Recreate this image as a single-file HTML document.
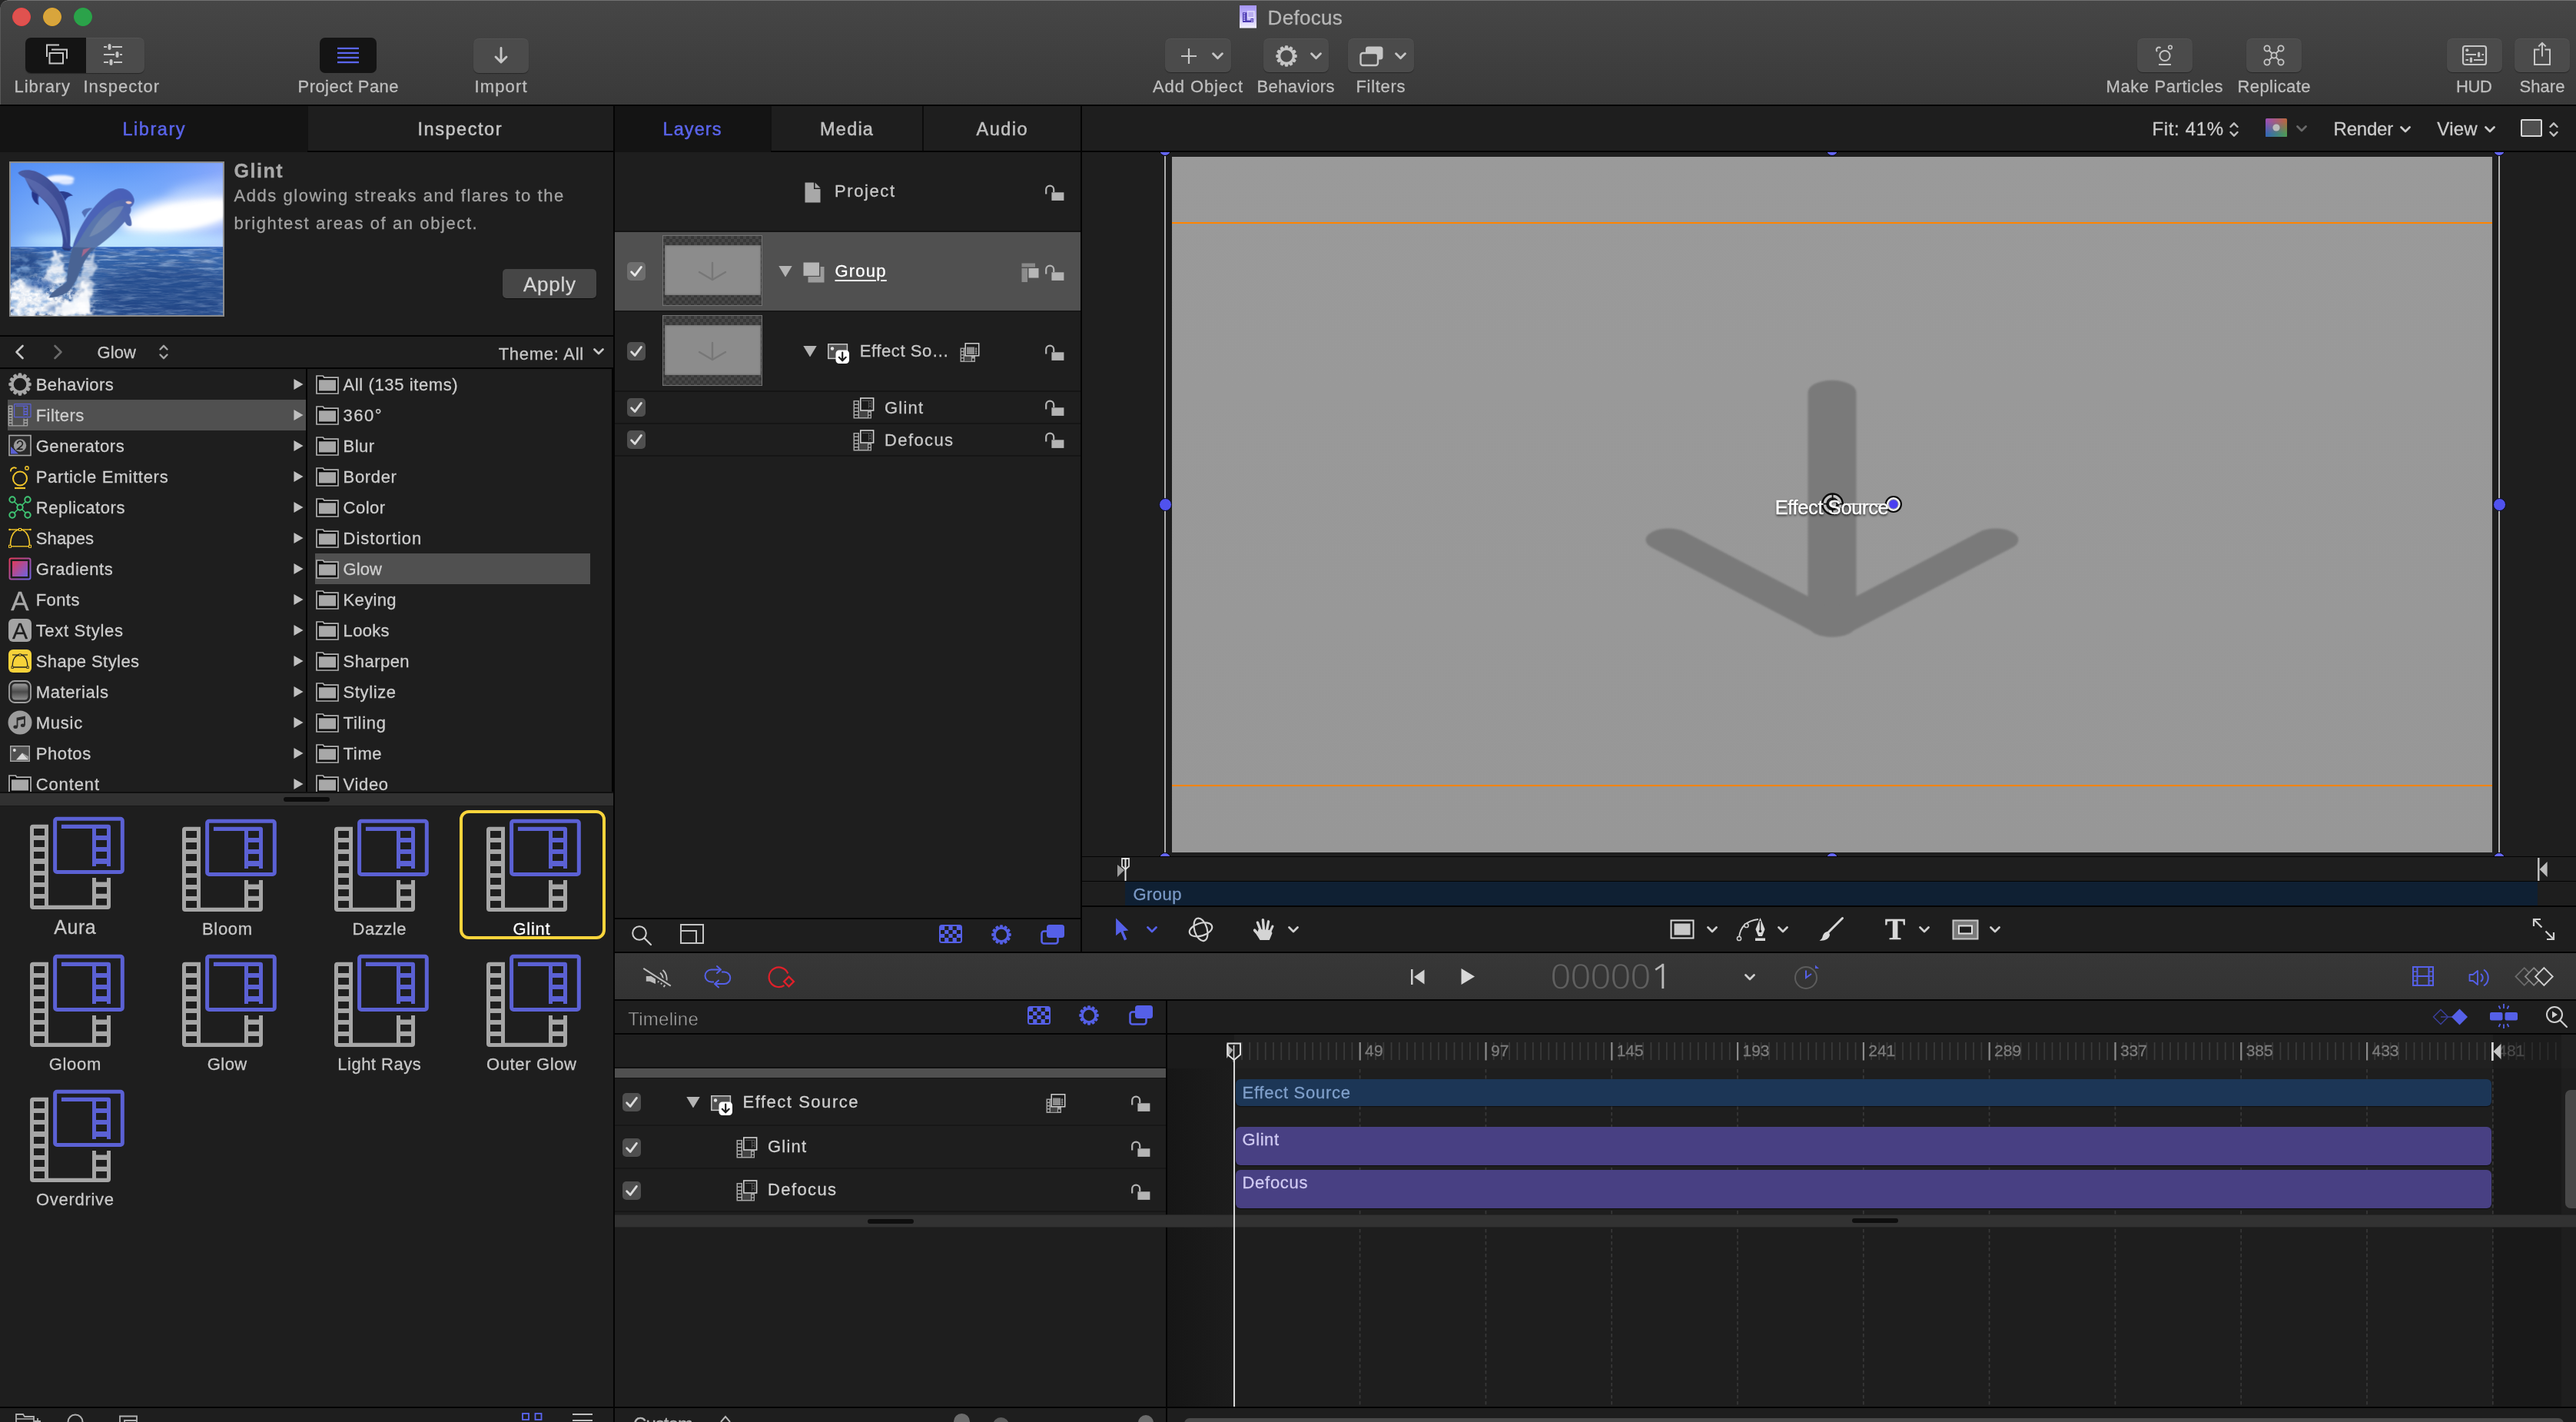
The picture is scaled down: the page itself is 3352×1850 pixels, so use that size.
<!DOCTYPE html>
<html><head><meta charset="utf-8"><title>Defocus</title>
<style>
html,body{margin:0;padding:0;background:#1e1e1e;overflow:hidden;}
html{width:3352px;height:1850px;}
body{width:3352px;height:1850px;position:relative;overflow:hidden;font-family:"Liberation Sans",sans-serif;}
body div{position:absolute;box-sizing:border-box;}
.t{white-space:nowrap;-webkit-text-stroke-width:0.3px;}
.i{position:absolute;overflow:visible;}
#root{left:0;top:0;width:3352px;height:1850px;will-change:transform;overflow:hidden;}
</style></head><body>
<svg width="0" height="0" style="position:absolute"><defs>
<symbol id="bigf" viewBox="0 0 200 180"><path fill="#a6a6a6" fill-rule="evenodd" d="M23 22.8 H43 V127.8 H100 V92 H105 V97.5 H119 V92 H124 V128.9 a4 4 0 0 1 -4 4 H23 a4 4 0 0 1 -4 -4 V26.8 a4 4 0 0 1 4 -4 Z M24 28.1 h14 v8.9 h-14 Z M24 43 h14 v8.9 h-14 Z M24 58 h14 v8.9 h-14 Z M24 74 h14 v8.9 h-14 Z M24 89 h14 v8.9 h-14 Z M24 104 h14 v8.9 h-14 Z M24 119 h14 v8.9 h-14 Z M105 104 h14 v8.7 h-14 Z M105 119 h14 v8.8 h-14 Z"/><rect x="51.6" y="15.2" width="87.7" height="69.3" rx="2.5" fill="none" stroke="#5b61d4" stroke-width="5"/><path fill="#5b61d4" fill-rule="evenodd" d="M59.9 22.8 H121 a3 3 0 0 1 3 3 V77 H119 V74 H105 V77 H100 V28.1 H59.9 Z M105 28.1 h14 v8.9 h-14 Z M105 43 h14 v9 h-14 Z M105 58 h14 v9 h-14 Z"/></symbol>
<symbol id="lock" viewBox="0 0 26 22"><path d="M1.2 12.5 V6.6 a5 5 0 0 1 10 0 V10" fill="none" stroke="#b4b4b4" stroke-width="2.2"/><rect x="8.4" y="10.3" width="16" height="10.6" fill="#b4b4b4"/></symbol>
<symbol id="chk" viewBox="0 0 24 24"><rect width="24" height="24" rx="5" fill="#4f4f4f"/><path d="M5.6 12.8 L10.2 17.4 L18.4 6.4" fill="none" stroke="#dcdcdc" stroke-width="2.8" stroke-linecap="round" stroke-linejoin="round"/></symbol>
<symbol id="tri" viewBox="0 0 18 15"><path d="M0 0 H18 L9 15 Z" fill="#b4b4b4"/></symbol>
<symbol id="arr" viewBox="0 0 13 15"><path d="M0 0 L13 7.5 L0 15 Z" fill="#c0c0c0"/></symbol>
<symbol id="folder" viewBox="0 0 30 25"><path d="M1 1 H9.300 L10.8 3.100 H29 V24 H1 Z" fill="#0c0c0c" stroke="#b2b2b2" stroke-width="1.700" stroke-linejoin="miter"/><rect x="3.900" y="6.300" width="22.2" height="14.2" fill="#a8a8a8"/></symbol>
<symbol id="smf" viewBox="0 0 28 28"><path fill="#a8a8a8" fill-rule="evenodd" d="M0.5 4 H8 V27.5 H0.5 Z M2 5.5 v3 h4.5 v-3 Z M2 10 v3 h4.5 v-3 Z M2 14.5 v3 h4.5 v-3 Z M2 19 v3 h4.5 v-3 Z M2 23.5 v2.5 h4.5 v-2.5 Z"/><path fill="#a8a8a8" fill-rule="evenodd" d="M19 18 H24 V27.5 H8 V26 H19 Z M20.3 19.5 v3 h2.4 v-3 Z M20.3 23.8 v2.4 h2.4 v-2.4 Z"/><rect x="8" y="18" width="11" height="8" fill="#444"/><rect x="9.8" y="1" width="16.8" height="16" fill="#1a1a1a" stroke="#d2d2d2" stroke-width="1.6"/><path d="M12 4.4 H24 M20.5 4.4 V14.5 M24 4.4 V14.5 M20.5 8 H24 M20.5 11.4 H24" stroke="#555" stroke-width="1.2" fill="none"/></symbol>
<symbol id="gear" viewBox="-14 -14 28 28"><path d="M-2.3 -10 L-1.5 -13.3 H1.5 L2.3 -10 Z" stroke="currentColor" stroke-width="0.8" stroke-linejoin="round" transform="rotate(0)"/><path d="M-2.3 -10 L-1.5 -13.3 H1.5 L2.3 -10 Z" stroke="currentColor" stroke-width="0.8" stroke-linejoin="round" transform="rotate(30)"/><path d="M-2.3 -10 L-1.5 -13.3 H1.5 L2.3 -10 Z" stroke="currentColor" stroke-width="0.8" stroke-linejoin="round" transform="rotate(60)"/><path d="M-2.3 -10 L-1.5 -13.3 H1.5 L2.3 -10 Z" stroke="currentColor" stroke-width="0.8" stroke-linejoin="round" transform="rotate(90)"/><path d="M-2.3 -10 L-1.5 -13.3 H1.5 L2.3 -10 Z" stroke="currentColor" stroke-width="0.8" stroke-linejoin="round" transform="rotate(120)"/><path d="M-2.3 -10 L-1.5 -13.3 H1.5 L2.3 -10 Z" stroke="currentColor" stroke-width="0.8" stroke-linejoin="round" transform="rotate(150)"/><path d="M-2.3 -10 L-1.5 -13.3 H1.5 L2.3 -10 Z" stroke="currentColor" stroke-width="0.8" stroke-linejoin="round" transform="rotate(180)"/><path d="M-2.3 -10 L-1.5 -13.3 H1.5 L2.3 -10 Z" stroke="currentColor" stroke-width="0.8" stroke-linejoin="round" transform="rotate(210)"/><path d="M-2.3 -10 L-1.5 -13.3 H1.5 L2.3 -10 Z" stroke="currentColor" stroke-width="0.8" stroke-linejoin="round" transform="rotate(240)"/><path d="M-2.3 -10 L-1.5 -13.3 H1.5 L2.3 -10 Z" stroke="currentColor" stroke-width="0.8" stroke-linejoin="round" transform="rotate(270)"/><path d="M-2.3 -10 L-1.5 -13.3 H1.5 L2.3 -10 Z" stroke="currentColor" stroke-width="0.8" stroke-linejoin="round" transform="rotate(300)"/><path d="M-2.3 -10 L-1.5 -13.3 H1.5 L2.3 -10 Z" stroke="currentColor" stroke-width="0.8" stroke-linejoin="round" transform="rotate(330)"/><circle r="9.15" fill="none" stroke-width="2.8" stroke="currentColor"/></symbol>
<symbol id="lay" viewBox="0 0 32 28"><rect x="8" y="1" width="23" height="17" rx="3.5"/><rect x="1.5" y="9.5" width="21" height="16" rx="3" fill="none" stroke="currentColor" stroke-width="2.6"/></symbol>
<symbol id="cbd" viewBox="0 0 30 24"><rect x="1" y="1" width="28" height="22" rx="2.5" fill="none" stroke="currentColor" stroke-width="2"/><rect x="2.0" y="2" width="5.2" height="5"/><rect x="2.0" y="12" width="5.2" height="5"/><rect x="7.2" y="7" width="5.2" height="5"/><rect x="7.2" y="17" width="5.2" height="5"/><rect x="12.4" y="2" width="5.2" height="5"/><rect x="12.4" y="12" width="5.2" height="5"/><rect x="17.6" y="7" width="5.2" height="5"/><rect x="17.6" y="17" width="5.2" height="5"/><rect x="22.8" y="2" width="5.2" height="5"/><rect x="22.8" y="12" width="5.2" height="5"/></symbol>
<symbol id="chev" viewBox="0 0 14 9"><path d="M1.5 1.5 L7 7 L12.5 1.5" fill="none" stroke="currentColor" stroke-width="2.7" stroke-linecap="round" stroke-linejoin="round"/></symbol>
<symbol id="step" viewBox="0 0 12 22"><path d="M1.5 7.5 L6 2.800 L10.5 7.5 M1.5 14.5 L6 19.200 L10.5 14.5" fill="none" stroke="currentColor" stroke-width="2.400" stroke-linecap="round" stroke-linejoin="round"/></symbol>
</defs></svg>
<div id="root">
<div style="left:0px;top:0px;width:3352px;height:1850px;background:#1e1e1e;"></div>
<div style="left:0px;top:0px;width:3352px;height:136px;background:linear-gradient(#464646,#393939);border-top:1px solid #727272;border-left:1px solid #585858;border-top-left-radius:10px;"></div>
<div style="left:0;top:0;width:12px;height:12px;background:radial-gradient(circle at 11px 11px, transparent 10.5px, #262626 11px);"></div>
<div style="left:0px;top:136px;width:3352px;height:2px;background:#040404;"></div>
<div style="left:16px;top:10px;width:24px;height:24px;border-radius:50%;background:#e0524f;border:1px solid #ee4646;"></div>
<div style="left:56px;top:10px;width:24px;height:24px;border-radius:50%;background:#d8a53c;border:1px solid #e5a82b;"></div>
<div style="left:96px;top:10px;width:24px;height:24px;border-radius:50%;background:#2ba24a;border:1px solid #25a845;"></div>
<div style="left:33px;top:49px;width:155px;height:45.5px;background:#4b4b4b;border-radius:7px;box-shadow:0 1px 1px rgba(0,0,0,.35), inset 0 1px 0 rgba(255,255,255,.05);"></div>
<div style="left:33px;top:49px;width:79px;height:45.5px;background:#141414;border-radius:7px 0 0 7px;"></div>
<svg class="i" style="left:58px;top:56px;" width="32" height="30" viewBox="0 0 32 30"><path d="M3 18 V2.5 H19" fill="none" stroke="#c6c6c6" stroke-width="2"/><path d="M9 8.5 H29 V20.5" fill="none" stroke="#c6c6c6" stroke-width="2"/><rect x="6.5" y="13" width="17.5" height="13.5" fill="none" stroke="#c6c6c6" stroke-width="2"/></svg>
<svg class="i" style="left:134px;top:55px;" width="28" height="32" viewBox="0 0 28 32"><path d="M1 6 H5.0 M12.0 6 H25" stroke="#c6c6c6" stroke-width="2" fill="none"/><rect x="6.5" y="2" width="4" height="8" rx="2" fill="#c6c6c6"/><path d="M1 16 H15.0 M22.0 16 H25" stroke="#c6c6c6" stroke-width="2" fill="none"/><rect x="16.5" y="12" width="4" height="8" rx="2" fill="#c6c6c6"/><path d="M1 26 H7.0 M14.0 26 H25" stroke="#c6c6c6" stroke-width="2" fill="none"/><rect x="8.5" y="22" width="4" height="8" rx="2" fill="#c6c6c6"/></svg>
<div class="t" style="left:18.60px;top:96.75px;height:31px;line-height:31px;font-size:22px;color:#bebebe;letter-spacing:0.859px;">Library</div>
<div class="t" style="left:108.50px;top:96.75px;height:31px;line-height:31px;font-size:22px;color:#bebebe;letter-spacing:1.001px;">Inspector</div>
<div style="left:416px;top:49px;width:74px;height:45.5px;background:#141414;border-radius:7px;"></div>
<svg class="i" style="left:438px;top:60px;" width="30" height="24" viewBox="0 0 30 24"><rect x="1" y="1.8" width="28" height="2.300" fill="#5b66f0"/><rect x="1" y="7.8" width="28" height="2.300" fill="#5b66f0"/><rect x="1" y="13.8" width="28" height="2.300" fill="#5b66f0"/><rect x="1" y="19.9" width="28" height="2.300" fill="#5b66f0"/></svg>
<div class="t" style="left:387.50px;top:96.75px;height:31px;line-height:31px;font-size:22px;color:#bebebe;letter-spacing:0.458px;">Project Pane</div>
<div style="left:616px;top:50px;width:72px;height:44.5px;background:#4b4b4b;border-radius:7px;box-shadow:0 1px 1px rgba(0,0,0,.35), inset 0 1px 0 rgba(255,255,255,.05);"></div>
<svg class="i" style="left:640px;top:59px;" width="24" height="26" viewBox="0 0 24 26"><path d="M12 3.500 V22 M5 15 L12 22 L19 15" fill="none" stroke="#c6c6c6" stroke-width="2.900" stroke-linecap="round" stroke-linejoin="round"/></svg>
<div class="t" style="left:617.50px;top:96.75px;height:31px;line-height:31px;font-size:22px;color:#bebebe;letter-spacing:1.130px;">Import</div>
<svg class="i" style="left:1613px;top:6.8px;" width="22" height="29.5" viewBox="0 0 22 29.5"><defs><linearGradient id="dg" x1="0" y1="0" x2="0" y2="1"><stop offset="0" stop-color="#a595f4"/><stop offset=".5" stop-color="#c3b8f8"/><stop offset="1" stop-color="#f4f1ff"/></linearGradient></defs><rect width="22" height="29.5" fill="url(#dg)"/><path fill="#4a38b0" fill-rule="evenodd" d="M4 9.200 H9.500 V19.5 H14.5 V17 H18 V22 H4 Z M5 10.2 v1.500 h2.300 v-1.500 Z M5 13 v1.500 h2.300 v-1.500 Z M5 15.800 v1.500 h2.300 v-1.500 Z M5 18.600 v1.500 h2.300 v-1.500 Z M15.3 18 v1.300 h1.900 v-1.300 Z M15.300 20 v1.200 h1.900 v-1.200 Z"/><rect x="10" y="7.200" width="9.700" height="9.300" fill="#e4defc"/><rect x="11.200" y="8.500" width="7" height="6.600" fill="#b9adf0"/></svg>
<div class="t" style="left:1649.60px;top:4.70px;height:36px;line-height:36px;font-size:26px;color:#b6b6b6;letter-spacing:0.303px;">Defocus</div>
<div style="left:1516px;top:50px;width:86px;height:44px;background:#4b4b4b;border-radius:7px;box-shadow:0 1px 1px rgba(0,0,0,.35), inset 0 1px 0 rgba(255,255,255,.05);"></div>
<div style="left:1643.5px;top:50px;width:85.5px;height:44px;background:#4b4b4b;border-radius:7px;box-shadow:0 1px 1px rgba(0,0,0,.35), inset 0 1px 0 rgba(255,255,255,.05);"></div>
<div style="left:1754px;top:50px;width:86px;height:44px;background:#4b4b4b;border-radius:7px;box-shadow:0 1px 1px rgba(0,0,0,.35), inset 0 1px 0 rgba(255,255,255,.05);"></div>
<svg class="i" style="left:1536px;top:62px;" width="22" height="22" viewBox="0 0 22 22"><path d="M11 1 V21 M1 11 H21" stroke="#c6c6c6" stroke-width="2.2" fill="none"/></svg>
<svg class="i" style="left:1577px;top:68px;color:#c6c6c6;" width="15" height="10"><use href="#chev"/></svg>
<svg class="i" style="left:1660px;top:58.5px;color:#c6c6c6;fill:#c6c6c6;" width="28" height="28"><use href="#gear"/></svg>
<svg class="i" style="left:1704.5px;top:68px;color:#c6c6c6;" width="15" height="10"><use href="#chev"/></svg>
<svg class="i" style="left:1769px;top:59px;" width="32" height="28" viewBox="0 0 32 28"><rect x="8" y="1.5" width="22.5" height="17" rx="3.5" fill="#c6c6c6"/><rect x="1.5" y="10" width="22.5" height="16" rx="3" fill="#4b4b4b" stroke="#c6c6c6" stroke-width="2.4"/></svg>
<svg class="i" style="left:1815px;top:68px;color:#c6c6c6;" width="15" height="10"><use href="#chev"/></svg>
<div class="t" style="left:1500.00px;top:96.75px;height:31px;line-height:31px;font-size:22px;color:#bebebe;letter-spacing:0.907px;">Add Object</div>
<div class="t" style="left:1635.50px;top:96.75px;height:31px;line-height:31px;font-size:22px;color:#bebebe;letter-spacing:0.396px;">Behaviors</div>
<div class="t" style="left:1764.50px;top:96.75px;height:31px;line-height:31px;font-size:22px;color:#bebebe;letter-spacing:0.686px;">Filters</div>
<div style="left:2781px;top:50px;width:72px;height:44px;background:#4b4b4b;border-radius:7px;box-shadow:0 1px 1px rgba(0,0,0,.35), inset 0 1px 0 rgba(255,255,255,.05);"></div>
<div style="left:2923px;top:50px;width:72px;height:44px;background:#4b4b4b;border-radius:7px;box-shadow:0 1px 1px rgba(0,0,0,.35), inset 0 1px 0 rgba(255,255,255,.05);"></div>
<div style="left:3184px;top:50px;width:72px;height:44px;background:#4b4b4b;border-radius:7px;box-shadow:0 1px 1px rgba(0,0,0,.35), inset 0 1px 0 rgba(255,255,255,.05);"></div>
<div style="left:3272px;top:50px;width:72px;height:44px;background:#4b4b4b;border-radius:7px;box-shadow:0 1px 1px rgba(0,0,0,.35), inset 0 1px 0 rgba(255,255,255,.05);"></div>
<svg class="i" style="left:2803px;top:57px;" width="28" height="30" viewBox="0 0 28 30"><circle cx="14" cy="15.5" r="6.6" fill="none" stroke="#c6c6c6" stroke-width="2"/><path d="M4 10 A 3 3 0 0 1 8.5 5.5" fill="none" stroke="#c6c6c6" stroke-width="2"/><circle cx="21" cy="4.5" r="2.3" fill="none" stroke="#c6c6c6" stroke-width="1.6"/><path d="M6 27 H22" stroke="#c6c6c6" stroke-width="2"/></svg>
<svg class="i" style="left:2944px;top:57px;" width="30" height="30" viewBox="0 0 30 30"><path d="M7 7 L23 23 M23 7 L7 23" stroke="#c6c6c6" stroke-width="1.8"/><circle cx="6" cy="6" r="3.6" fill="#4b4b4b" stroke="#c6c6c6" stroke-width="1.8"/><circle cx="24" cy="6" r="3.6" fill="#4b4b4b" stroke="#c6c6c6" stroke-width="1.8"/><circle cx="15" cy="15" r="3.6" fill="#4b4b4b" stroke="#c6c6c6" stroke-width="1.8"/><circle cx="6" cy="24" r="3.6" fill="#4b4b4b" stroke="#c6c6c6" stroke-width="1.8"/><circle cx="24" cy="24" r="3.6" fill="#4b4b4b" stroke="#c6c6c6" stroke-width="1.8"/></svg>
<svg class="i" style="left:3203px;top:58px;" width="34" height="28" viewBox="0 0 34 28"><rect x="2" y="2" width="30" height="24" rx="2.800" fill="none" stroke="#c6c6c6" stroke-width="2.200"/><path d="M5.500 13 H19 M26.5 13 H29 M5.500 20 H9 M16 20 H28.500" stroke="#c6c6c6" stroke-width="1.900"/><circle cx="7.300" cy="7.200" r="2" fill="#c6c6c6"/><rect x="21" y="9.500" width="3.200" height="7" rx="1.600" fill="#c6c6c6"/><rect x="10.800" y="16.500" width="3.200" height="7" rx="1.600" fill="#c6c6c6"/></svg>
<svg class="i" style="left:3296px;top:53px;" width="24" height="34" viewBox="0 0 24 34"><path d="M8.500 11.500 H2 V31 H22 V11.500 H15.500" fill="none" stroke="#c6c6c6" stroke-width="2"/><path d="M12 20.500 V3 M7.300 7.500 L12 2.800 L16.700 7.500" fill="none" stroke="#c6c6c6" stroke-width="2" stroke-linejoin="miter"/></svg>
<div class="t" style="left:2740.50px;top:96.75px;height:31px;line-height:31px;font-size:22px;color:#bebebe;letter-spacing:0.595px;">Make Particles</div>
<div class="t" style="left:2911.50px;top:96.75px;height:31px;line-height:31px;font-size:22px;color:#bebebe;letter-spacing:0.411px;">Replicate</div>
<div class="t" style="left:3196.00px;top:96.75px;height:31px;line-height:31px;font-size:22px;color:#bebebe;letter-spacing:-0.330px;">HUD</div>
<div class="t" style="left:3278.50px;top:96.75px;height:31px;line-height:31px;font-size:22px;color:#bebebe;letter-spacing:0.073px;">Share</div>
<div style="left:0px;top:138px;width:400px;height:60px;background:#141414;"></div>
<div style="left:400px;top:138px;width:398px;height:58px;background:#1e1e1e;"></div>
<div style="left:400px;top:196px;width:398px;height:2px;background:#040404;"></div>
<div style="left:399px;top:138px;width:1.5px;height:58px;background:#141414;"></div>
<div style="left:798px;top:138px;width:2px;height:1712px;background:#040404;"></div>
<div class="t" style="left:159.50px;top:151.77px;height:33px;line-height:33px;font-size:23.5px;color:#5a64ea;letter-spacing:1.528px;-webkit-text-stroke:0.5px #5a64ea;">Library</div>
<div class="t" style="left:543.50px;top:151.77px;height:33px;line-height:33px;font-size:23.5px;color:#c4c4c4;letter-spacing:1.542px;-webkit-text-stroke:0.5px #c4c4c4;">Inspector</div>
<svg class="i" style="left:12px;top:210px;" width="280" height="202" viewBox="78 65 1810 1305"><defs>
<linearGradient id="sky" x1="0" y1="0" x2="0" y2="1"><stop offset="0" stop-color="#5a94f6"/><stop offset=".35" stop-color="#76aafa"/><stop offset=".8" stop-color="#9cc8fc"/><stop offset="1" stop-color="#b9e0ff"/></linearGradient>
<linearGradient id="sky2" x1="0" y1="0" x2="1" y2="0"><stop offset="0" stop-color="#4a86f2" stop-opacity=".5"/><stop offset=".45" stop-color="#6fa6fa" stop-opacity="0"/><stop offset="1" stop-color="#a9b4ff" stop-opacity=".55"/></linearGradient>
<linearGradient id="sea" x1="0" y1="0" x2="0" y2="1"><stop offset="0" stop-color="#2b60b8"/><stop offset=".12" stop-color="#3666ab"/><stop offset=".5" stop-color="#2f5a9c"/><stop offset="1" stop-color="#294d8b"/></linearGradient>
<linearGradient id="d1" x1="0" y1="0" x2="1" y2="1"><stop offset="0" stop-color="#4d5da3"/><stop offset=".5" stop-color="#3e4d94"/><stop offset="1" stop-color="#384a96"/></linearGradient>
<linearGradient id="d2" x1="1" y1="0" x2="0" y2="1"><stop offset="0" stop-color="#4a5fb4"/><stop offset=".35" stop-color="#5a76ae"/><stop offset=".7" stop-color="#5b78a6"/><stop offset="1" stop-color="#6a7fa2"/></linearGradient>
<filter id="b40" x="-50%" y="-50%" width="200%" height="200%"><feGaussianBlur stdDeviation="45"/></filter>
<filter id="b20" x="-50%" y="-50%" width="200%" height="200%"><feGaussianBlur stdDeviation="16"/></filter>
<filter id="b10" x="-50%" y="-50%" width="200%" height="200%"><feGaussianBlur stdDeviation="9"/></filter>
<filter id="b6" x="-20%" y="-20%" width="140%" height="140%"><feGaussianBlur stdDeviation="4"/></filter>
<filter id="wv" x="0" y="0" width="100%" height="100%"><feTurbulence type="fractalNoise" baseFrequency="0.006 0.045" numOctaves="4" seed="7" result="n"/><feColorMatrix in="n" type="matrix" values="0 0 0 0 0.72  0 0 0 0 0.84  0 0 0 0 1  2.6 0 0 0 -1.25"/><feGaussianBlur stdDeviation="2"/></filter>
<filter id="wd" x="0" y="0" width="100%" height="100%"><feTurbulence type="fractalNoise" baseFrequency="0.005 0.04" numOctaves="3" seed="21" result="n"/><feColorMatrix in="n" type="matrix" values="0 0 0 0 0.08  0 0 0 0 0.17  0 0 0 0 0.4  0 2.8 0 0 -1.2"/><feGaussianBlur stdDeviation="3"/></filter>
<filter id="sp" x="-30%" y="-30%" width="160%" height="160%"><feTurbulence type="fractalNoise" baseFrequency="0.02 0.016" numOctaves="3" seed="4" result="n"/><feDisplacementMap in="SourceGraphic" in2="n" scale="120" xChannelSelector="R" yChannelSelector="G"/><feGaussianBlur stdDeviation="7"/></filter>
<filter id="fo" x="0" y="0" width="100%" height="100%"><feTurbulence type="fractalNoise" baseFrequency="0.03 0.03" numOctaves="3" seed="11" result="n"/><feColorMatrix in="n" type="matrix" values="0 0 0 0 1  0 0 0 0 1  0 0 0 0 1  3.5 0 0 0 -1.45"/><feGaussianBlur stdDeviation="2.500"/></filter>
<filter id="bs" x="0" y="0" width="100%" height="100%"><feTurbulence type="fractalNoise" baseFrequency="0.012 0.02" numOctaves="4" seed="33" result="n"/><feColorMatrix in="n" type="matrix" values="0 0 0 0 0.24  0 0 0 0 0.42  0 0 0 0 0.72  0 0 3.4 0 -1.55"/><feGaussianBlur stdDeviation="5"/></filter>
<linearGradient id="spg" x1="0" y1="0" x2="1" y2="0"><stop offset="0" stop-color="#fff"/><stop offset=".72" stop-color="#fff"/><stop offset="1" stop-color="#000"/></linearGradient><linearGradient id="spg2" x1="0" y1="0" x2="0" y2="1"><stop offset="0" stop-color="#000"/><stop offset=".3" stop-color="#fff"/></linearGradient><mask id="spc"><rect x="90" y="786" width="760" height="572" fill="url(#spg)"/><rect x="90" y="786" width="760" height="572" fill="url(#spg2)" style="mix-blend-mode:multiply"/></mask>
<clipPath id="pc"><rect x="90" y="78" width="1786" height="1280"/></clipPath>
<clipPath id="seac"><rect x="90" y="786" width="1786" height="572"/></clipPath>
<radialGradient id="fm" cx=".22" cy=".95" r=".62" gradientTransform="scale(1 .9)"><stop offset="0" stop-color="#fff"/><stop offset=".55" stop-color="#fff" stop-opacity=".9"/><stop offset="1" stop-color="#fff" stop-opacity="0"/></radialGradient>
<mask id="fmask"><rect x="90" y="786" width="1786" height="572" fill="#000"/><ellipse cx="330" cy="1290" rx="520" ry="330" fill="url(#fmg)"/></mask>
<radialGradient id="fmg"><stop offset="0" stop-color="#fff"/><stop offset=".6" stop-color="#bbb"/><stop offset="1" stop-color="#000"/></radialGradient>
</defs>
<rect x="78" y="65" width="1810" height="1305" fill="#8e8e8e"/>
<g clip-path="url(#pc)">
<rect x="90" y="78" width="1786" height="710" fill="url(#sky)"/>
<rect x="90" y="78" width="1786" height="710" fill="url(#sky2)"/>
<ellipse cx="1530" cy="515" rx="520" ry="150" fill="#ffffff" filter="url(#b40)" transform="rotate(-10 1530 515)"/>
<ellipse cx="1560" cy="520" rx="400" ry="105" fill="#ffffff" filter="url(#b20)" transform="rotate(-10 1560 520)"/>
<ellipse cx="1700" cy="300" rx="300" ry="60" fill="#c4dcff" opacity=".6" filter="url(#b40)" transform="rotate(-10 1700 300)"/>
<ellipse cx="1100" cy="735" rx="900" ry="55" fill="#c4ecff" opacity=".85" filter="url(#b40)"/>
<ellipse cx="505" cy="212" rx="120" ry="32" fill="#eef3ff" filter="url(#b10)"/>
<ellipse cx="560" cy="238" rx="60" ry="22" fill="#dfe9ff" filter="url(#b10)"/>
<rect x="90" y="786" width="1786" height="572" fill="url(#sea)"/>
<g clip-path="url(#seac)">
<rect x="90" y="786" width="1786" height="572" filter="url(#wd)"/>
<rect x="90" y="786" width="1786" height="572" filter="url(#wv)" opacity=".55"/>
<ellipse cx="1400" cy="1160" rx="560" ry="210" fill="#1d3f80" opacity=".45" filter="url(#b40)"/>
<ellipse cx="180" cy="900" rx="170" ry="90" fill="#1c3a78" opacity=".6" filter="url(#b40)"/>
<rect x="90" y="786" width="1786" height="572" filter="url(#fo)" mask="url(#fmask)"/>
</g>
<rect x="90" y="783" width="1786" height="5" fill="#2d5fc0" opacity=".8"/>
<g filter="url(#sp)" fill="#ffffff" opacity=".9">
<path d="M90 1080 C200 1030 330 1100 400 1180 C470 1240 560 1230 640 1260 C720 1290 780 1330 800 1360 L90 1360 Z"/>
<path d="M420 1080 C400 980 430 860 470 800 C490 860 540 900 560 1000 C570 1060 540 1090 500 1100 Z" opacity=".95"/>
<path d="M610 1330 C590 1200 640 1060 700 960 C720 900 760 840 790 800 C800 900 790 1000 770 1100 C760 1200 760 1280 770 1340 Z" opacity=".7"/>
<path d="M360 1080 C380 1000 410 960 440 900 C450 980 450 1040 430 1100 Z" opacity=".8"/>
</g>
<g mask="url(#spc)"><rect x="90" y="786" width="760" height="572" filter="url(#bs)" opacity=".8"/></g>
<ellipse cx="330" cy="1095" rx="120" ry="40" fill="#3d68ad" opacity=".7" filter="url(#b20)"/>
<ellipse cx="500" cy="1300" rx="110" ry="30" fill="#6f8fc0" opacity=".75" filter="url(#b20)"/>
<ellipse cx="240" cy="1010" rx="90" ry="30" fill="#2c528f" opacity=".5" filter="url(#b20)"/>
<g filter="url(#b6)">
<path d="M152 160 C170 138 235 125 300 148 C395 185 480 265 530 365 C580 470 598 640 590 770 L602 800 L545 812 L520 792 C540 745 525 640 480 545 C440 465 390 410 330 355 C318 380 322 410 328 430 C285 415 262 360 270 318 C240 275 222 225 205 200 C182 190 160 178 152 160 Z" fill="url(#d1)"/>
<path d="M500 318 C545 312 592 328 614 354 C582 352 562 366 548 398 C535 370 520 340 500 318 Z" fill="#2c3c8e"/>
<path d="M268 316 C260 360 282 412 327 430 C310 395 314 360 318 342 Z" fill="#26368a"/>
<path d="M205 200 C300 215 420 300 480 400 C535 495 560 620 566 760 C535 640 500 540 440 460 C375 380 280 320 205 200 Z" fill="#6c7cbc" opacity=".45"/>
<path d="M522 790 L602 800 L585 818 L540 812 Z" fill="#2a3a78"/>
<path d="M1010 292 C1078 292 1124 340 1130 398 C1128 420 1115 438 1098 450 C1108 470 1100 495 1088 512 C1102 545 1112 580 1106 604 C1086 616 1064 602 1050 572 C990 645 905 722 805 792 C745 835 705 905 665 1005 C645 1062 615 1112 594 1135 C575 1175 480 1205 412 1212 C438 1150 520 1112 562 1082 C568 1000 578 900 612 782 C650 640 760 470 860 380 C910 335 960 295 1010 292 Z" fill="url(#d2)"/>
<path d="M1010 292 C1078 292 1124 340 1130 398 C1090 372 1000 378 930 420 C850 470 770 560 705 665 C668 725 645 765 615 790 C650 640 760 470 860 380 C910 335 960 295 1010 292 Z" fill="#4a60b8" opacity=".85"/>
<path d="M930 470 C860 520 790 610 750 700 C800 690 880 640 950 570 C1000 520 1030 470 1040 440 C1000 440 960 450 930 470 Z" fill="#8fa2b8" opacity=".45"/>
<path d="M688 494 C698 466 740 452 778 458 C742 482 722 512 714 538 Z" fill="#526fb6"/>
<path d="M1056 406 C1074 394 1102 398 1110 413 C1096 427 1070 427 1056 406 Z" fill="#ecc9c2"/>
<path d="M612 785 L805 792 C745 835 705 905 665 1005 C645 1062 615 1112 594 1135 C575 1175 480 1205 412 1212 C438 1150 520 1112 562 1082 C568 1000 578 900 612 785 Z" fill="#46608f" opacity=".85"/>
<path d="M700 805 L765 790 L685 870 Z" fill="#c26a8c" opacity=".75"/>
</g>
<g filter="url(#sp)" fill="#ffffff"><path d="M480 1330 C500 1260 560 1220 640 1230 C700 1180 680 1100 720 1040 C740 1120 760 1220 770 1340 Z" opacity=".85"/></g>
</g></svg>
<div class="t" style="left:304.50px;top:205.29px;height:35px;line-height:35px;font-size:25px;color:#a9a9a9;letter-spacing:1.518px;font-weight:bold;">Glint</div>
<div class="t" style="left:304.50px;top:239.25px;height:31px;line-height:31px;font-size:22px;color:#a2a2a2;letter-spacing:1.539px;">Adds glowing streaks and flares to the</div>
<div class="t" style="left:304.50px;top:275.25px;height:31px;line-height:31px;font-size:22px;color:#a2a2a2;letter-spacing:1.597px;">brightest areas of an object.</div>
<div style="left:654px;top:350px;width:122px;height:38px;background:#464646;border-radius:5px;box-shadow:0 1px 1px rgba(0,0,0,.5);"></div>
<div class="t" style="left:681.00px;top:351.80px;height:36px;line-height:36px;font-size:26px;color:#d4d4d4;letter-spacing:0.739px;">Apply</div>
<div style="left:0px;top:435.5px;width:798px;height:2.5px;background:#040404;"></div>
<svg class="i" style="left:18px;top:446px;" width="16" height="24" viewBox="0 0 16 24"><path d="M11.5 4 L3.500 12 L11.5 20" fill="none" stroke="#c8c8c8" stroke-width="2.600" stroke-linecap="round" stroke-linejoin="round"/></svg>
<svg class="i" style="left:67px;top:446px;" width="16" height="24" viewBox="0 0 16 24"><path d="M4.500 4 L12.500 12 L4.500 20" fill="none" stroke="#6a6a6a" stroke-width="2.600" stroke-linecap="round" stroke-linejoin="round"/></svg>
<div class="t" style="left:126.50px;top:442.75px;height:31px;line-height:31px;font-size:22px;color:#c6c6c6;letter-spacing:0.126px;">Glow</div>
<svg class="i" style="left:207px;top:447px;color:#a4a4a4;" width="12" height="22"><use href="#step"/></svg>
<div class="t" style="left:648.70px;top:444.75px;height:31px;line-height:31px;font-size:22px;color:#c6c6c6;letter-spacing:0.730px;">Theme: All</div>
<svg class="i" style="left:772px;top:453px;color:#c8c8c8;" width="14" height="9"><use href="#chev"/></svg>
<div style="left:0px;top:478px;width:798px;height:2px;background:#040404;"></div>
<div style="left:10px;top:520px;width:388px;height:40px;background:#505050;"></div>
<div style="left:398px;top:480px;width:2px;height:550px;background:#040404;"></div>
<div style="left:796px;top:480px;width:2px;height:550px;background:#040404;"></div>
<div class="t" style="left:46.70px;top:484.75px;height:31px;line-height:31px;font-size:22px;color:#cdcdcd;letter-spacing:0.396px;">Behaviors</div>
<svg class="i" style="left:381.5px;top:493px;" width="13" height="14"><use href="#arr"/></svg>
<div class="t" style="left:46.70px;top:524.75px;height:31px;line-height:31px;font-size:22px;color:#cdcdcd;letter-spacing:0.452px;">Filters</div>
<svg class="i" style="left:381.5px;top:533px;" width="13" height="14"><use href="#arr"/></svg>
<div class="t" style="left:46.70px;top:564.75px;height:31px;line-height:31px;font-size:22px;color:#cdcdcd;letter-spacing:0.549px;">Generators</div>
<svg class="i" style="left:381.5px;top:573px;" width="13" height="14"><use href="#arr"/></svg>
<div class="t" style="left:46.70px;top:604.75px;height:31px;line-height:31px;font-size:22px;color:#cdcdcd;letter-spacing:0.740px;">Particle Emitters</div>
<svg class="i" style="left:381.5px;top:613px;" width="13" height="14"><use href="#arr"/></svg>
<div class="t" style="left:46.70px;top:644.75px;height:31px;line-height:31px;font-size:22px;color:#cdcdcd;letter-spacing:0.566px;">Replicators</div>
<svg class="i" style="left:381.5px;top:653px;" width="13" height="14"><use href="#arr"/></svg>
<div class="t" style="left:46.70px;top:684.75px;height:31px;line-height:31px;font-size:22px;color:#cdcdcd;letter-spacing:0.157px;">Shapes</div>
<svg class="i" style="left:381.5px;top:693px;" width="13" height="14"><use href="#arr"/></svg>
<div class="t" style="left:46.70px;top:724.75px;height:31px;line-height:31px;font-size:22px;color:#cdcdcd;letter-spacing:0.578px;">Gradients</div>
<svg class="i" style="left:381.5px;top:733px;" width="13" height="14"><use href="#arr"/></svg>
<div class="t" style="left:46.70px;top:764.75px;height:31px;line-height:31px;font-size:22px;color:#cdcdcd;letter-spacing:0.420px;">Fonts</div>
<svg class="i" style="left:381.5px;top:773px;" width="13" height="14"><use href="#arr"/></svg>
<div class="t" style="left:46.70px;top:804.75px;height:31px;line-height:31px;font-size:22px;color:#cdcdcd;letter-spacing:0.683px;">Text Styles</div>
<svg class="i" style="left:381.5px;top:813px;" width="13" height="14"><use href="#arr"/></svg>
<div class="t" style="left:46.70px;top:844.75px;height:31px;line-height:31px;font-size:22px;color:#cdcdcd;letter-spacing:0.433px;">Shape Styles</div>
<svg class="i" style="left:381.5px;top:853px;" width="13" height="14"><use href="#arr"/></svg>
<div class="t" style="left:46.70px;top:884.75px;height:31px;line-height:31px;font-size:22px;color:#cdcdcd;letter-spacing:0.632px;">Materials</div>
<svg class="i" style="left:381.5px;top:893px;" width="13" height="14"><use href="#arr"/></svg>
<div class="t" style="left:46.70px;top:924.75px;height:31px;line-height:31px;font-size:22px;color:#cdcdcd;letter-spacing:0.788px;">Music</div>
<svg class="i" style="left:381.5px;top:933px;" width="13" height="14"><use href="#arr"/></svg>
<div class="t" style="left:46.70px;top:964.75px;height:31px;line-height:31px;font-size:22px;color:#cdcdcd;letter-spacing:0.602px;">Photos</div>
<svg class="i" style="left:381.5px;top:973px;" width="13" height="14"><use href="#arr"/></svg>
<div class="t" style="left:46.70px;top:1004.75px;height:31px;line-height:31px;font-size:22px;color:#cdcdcd;letter-spacing:0.875px;">Content</div>
<svg class="i" style="left:381.5px;top:1013px;" width="13" height="14"><use href="#arr"/></svg>
<svg class="i" style="left:11px;top:485px;color:#a8a8a8;fill:#a8a8a8;" width="30" height="30"><use href="#gear"/></svg>
<svg class="i" style="left:5.7px;top:522px;" width="48.8" height="43.9" viewBox="0 0 200 180"><use href="#bigf"/></svg>
<svg class="i" style="left:11px;top:565px;" width="30" height="30" viewBox="0 0 30 30"><rect x="1" y="1.500" width="28" height="26" fill="#2a2a2a" stroke="#a8a8a8" stroke-width="1.6"/><path d="M3 16 V25.5 H13 Z" fill="#5b61d4"/><circle cx="15" cy="14.5" r="8.2" fill="#9a9a9a"/><path d="M11.6 12.2 a3.4 3.4 0 1 1 5.8 2.4 L11.8 19.3 H18.6" fill="none" stroke="#222" stroke-width="1.7"/></svg>
<svg class="i" style="left:11px;top:605px;" width="30" height="32" viewBox="0 0 30 32"><circle cx="15" cy="17.5" r="9" fill="none" stroke="#f2c62a" stroke-width="2"/><path d="M3 8.500 A 4.500 4.500 0 0 1 10.5 4.500" fill="none" stroke="#f2c62a" stroke-width="1.8"/><circle cx="24" cy="4" r="2.2" fill="none" stroke="#f2c62a" stroke-width="1.4"/><path d="M8 30 H22" stroke="#f2c62a" stroke-width="2.2"/></svg>
<svg class="i" style="left:11px;top:645px;" width="30" height="30" viewBox="0 0 30 30"><path d="M6 6 L24 24 M24 6 L6 24" stroke="#3fc674" stroke-width="1.6"/><circle cx="5" cy="5" r="3.7" fill="#1e1e1e" stroke="#3fc674" stroke-width="2"/><circle cx="25" cy="5" r="3.7" fill="#1e1e1e" stroke="#3fc674" stroke-width="2"/><circle cx="15" cy="15" r="3.7" fill="#1e1e1e" stroke="#3fc674" stroke-width="2"/><circle cx="5" cy="25" r="3.7" fill="#1e1e1e" stroke="#3fc674" stroke-width="2"/><circle cx="25" cy="25" r="3.7" fill="#1e1e1e" stroke="#3fc674" stroke-width="2"/></svg>
<svg class="i" style="left:11px;top:686px;" width="30" height="28" viewBox="0 0 30 28"><path d="M2 3 H28" stroke="#f2c62a" stroke-width="1.4"/><path d="M2.500 24 C2.500 10 8 3 15 3 C22 3 27.5 10 27.5 24" fill="none" stroke="#f2c62a" stroke-width="1.6"/><path d="M2 24.8 H28" stroke="#f2c62a" stroke-width="1.4"/><rect x="0.5" y="23.3" width="3" height="3" fill="#1e1e1e" stroke="#f2c62a" stroke-width="1"/><rect x="26.5" y="23.3" width="3" height="3" fill="#1e1e1e" stroke="#f2c62a" stroke-width="1"/><rect x="13.5" y="1.5" width="3" height="3" fill="#1e1e1e" stroke="#f2c62a" stroke-width="1"/><circle cx="1.500" cy="3" r="1.300" fill="#f2c62a"/><circle cx="28.5" cy="3" r="1.300" fill="#f2c62a"/></svg>
<svg class="i" style="left:11px;top:725px;" width="30" height="30" viewBox="0 0 30 30"><defs><linearGradient id="gg" x1="0" y1="0" x2="1" y2="1"><stop offset="0" stop-color="#e23a5a"/><stop offset="1" stop-color="#6d63e0"/></linearGradient></defs><rect x="1.500" y="1.500" width="27" height="27" rx="2" fill="#1e1e1e" stroke="url(#gg)" stroke-width="2"/><rect x="5" y="5" width="20" height="20" fill="url(#gg)"/></svg>
<div class="t" style="left:14.33px;top:756.90px;height:49px;line-height:49px;font-size:35px;color:#a8a8a8;letter-spacing:0.000px;">A</div>
<div style="left:11px;top:805px;width:30px;height:30px;background:#a4a4a4;border-radius:6px;"></div>
<div class="t" style="left:15.99px;top:800.35px;height:42px;line-height:42px;font-size:30px;color:#1e1e1e;letter-spacing:0.000px;">A</div>
<div style="left:11px;top:845px;width:30px;height:30px;background:#f7d23a;border-radius:6px;"></div>
<svg class="i" style="left:11px;top:845px;" width="30" height="30" viewBox="0 0 30 30"><path d="M5 7 H25" stroke="#222" stroke-width="1.1"/><path d="M5 23 C5 12 9.500 7 15 7 C20.5 7 25 12 25 23 Z" fill="none" stroke="#222" stroke-width="1.3"/><rect x="4" y="22" width="2.500" height="2.500" fill="#f7d23a" stroke="#222" stroke-width=".8"/><rect x="23.8" y="22" width="2.500" height="2.500" fill="#f7d23a" stroke="#222" stroke-width=".8"/><rect x="13.8" y="5.800" width="2.500" height="2.500" fill="#f7d23a" stroke="#222" stroke-width=".8"/></svg>
<svg class="i" style="left:11px;top:885px;" width="30" height="30" viewBox="0 0 30 30"><defs><linearGradient id="mg" x1="0" y1="0" x2="0" y2="1"><stop offset="0" stop-color="#9c9c9c"/><stop offset=".5" stop-color="#4a4a4a"/><stop offset="1" stop-color="#8c8c8c"/></linearGradient></defs><rect x="1" y="1" width="28" height="28" rx="7" fill="#2a2a2a" stroke="#a0a0a0" stroke-width="1.8"/><rect x="4.500" y="4.500" width="21" height="21" rx="4.500" fill="url(#mg)"/></svg>
<svg class="i" style="left:10px;top:924px;" width="32" height="32" viewBox="0 0 32 32"><circle cx="16" cy="16" r="15.5" fill="#9c9c9c"/><path d="M12.5 21.5 V10.5 L22 8.500 V19.5" fill="none" stroke="#2a2a2a" stroke-width="1.8"/><path d="M12.5 10.5 L22 8.500 V11.5 L12.5 13.5 Z" fill="#2a2a2a"/><ellipse cx="10.2" cy="21.8" rx="2.800" ry="2.200" fill="#2a2a2a"/><ellipse cx="19.7" cy="19.8" rx="2.800" ry="2.200" fill="#2a2a2a"/></svg>
<svg class="i" style="left:13px;top:969.5px;" width="26" height="21" viewBox="0 0 26 21"><rect x=".7" y=".7" width="24.6" height="19.6" fill="#505050" stroke="#a8a8a8" stroke-width="1.4"/><circle cx="5.800" cy="6" r="2" fill="#e0e0e0"/><path d="M8 18.5 L16 9.500 L24 18.5 Z" fill="#d8d8d8"/><path d="M16 9.500 L24 18.5 V14 Z" fill="#9a9a9a"/></svg>
<div style="left:0;top:1004px;width:398px;height:26px;overflow:hidden;background:none;"><svg class="i" style="left:11px;top:4.300px" width="30" height="25"><use href="#folder"/></svg></div>
<div style="left:410px;top:720px;width:358px;height:40px;background:#505050;"></div>
<svg class="i" style="left:411px;top:488.3px;" width="30" height="25"><use href="#folder"/></svg>
<div class="t" style="left:446.60px;top:484.75px;height:31px;line-height:31px;font-size:22px;color:#cdcdcd;letter-spacing:0.600px;">All (135 items)</div>
<svg class="i" style="left:411px;top:528.3px;" width="30" height="25"><use href="#folder"/></svg>
<div class="t" style="left:446.60px;top:524.75px;height:31px;line-height:31px;font-size:22px;color:#cdcdcd;letter-spacing:1.500px;">360°</div>
<svg class="i" style="left:411px;top:568.3px;" width="30" height="25"><use href="#folder"/></svg>
<div class="t" style="left:446.60px;top:564.75px;height:31px;line-height:31px;font-size:22px;color:#cdcdcd;letter-spacing:0.458px;">Blur</div>
<svg class="i" style="left:411px;top:608.3px;" width="30" height="25"><use href="#folder"/></svg>
<div class="t" style="left:446.60px;top:604.75px;height:31px;line-height:31px;font-size:22px;color:#cdcdcd;letter-spacing:0.653px;">Border</div>
<svg class="i" style="left:411px;top:648.3px;" width="30" height="25"><use href="#folder"/></svg>
<div class="t" style="left:446.60px;top:644.75px;height:31px;line-height:31px;font-size:22px;color:#cdcdcd;letter-spacing:0.482px;">Color</div>
<svg class="i" style="left:411px;top:688.3px;" width="30" height="25"><use href="#folder"/></svg>
<div class="t" style="left:446.60px;top:684.75px;height:31px;line-height:31px;font-size:22px;color:#cdcdcd;letter-spacing:0.976px;">Distortion</div>
<svg class="i" style="left:411px;top:728.3px;" width="30" height="25"><use href="#folder"/></svg>
<div class="t" style="left:446.60px;top:724.75px;height:31px;line-height:31px;font-size:22px;color:#cdcdcd;letter-spacing:0.093px;">Glow</div>
<svg class="i" style="left:411px;top:768.3px;" width="30" height="25"><use href="#folder"/></svg>
<div class="t" style="left:446.60px;top:764.75px;height:31px;line-height:31px;font-size:22px;color:#cdcdcd;letter-spacing:0.327px;">Keying</div>
<svg class="i" style="left:411px;top:808.3px;" width="30" height="25"><use href="#folder"/></svg>
<div class="t" style="left:446.60px;top:804.75px;height:31px;line-height:31px;font-size:22px;color:#cdcdcd;letter-spacing:0.299px;">Looks</div>
<svg class="i" style="left:411px;top:848.3px;" width="30" height="25"><use href="#folder"/></svg>
<div class="t" style="left:446.60px;top:844.75px;height:31px;line-height:31px;font-size:22px;color:#cdcdcd;letter-spacing:0.471px;">Sharpen</div>
<svg class="i" style="left:411px;top:888.3px;" width="30" height="25"><use href="#folder"/></svg>
<div class="t" style="left:446.60px;top:884.75px;height:31px;line-height:31px;font-size:22px;color:#cdcdcd;letter-spacing:0.601px;">Stylize</div>
<svg class="i" style="left:411px;top:928.3px;" width="30" height="25"><use href="#folder"/></svg>
<div class="t" style="left:446.60px;top:924.75px;height:31px;line-height:31px;font-size:22px;color:#cdcdcd;letter-spacing:0.730px;">Tiling</div>
<svg class="i" style="left:411px;top:968.3px;" width="30" height="25"><use href="#folder"/></svg>
<div class="t" style="left:446.60px;top:964.75px;height:31px;line-height:31px;font-size:22px;color:#cdcdcd;letter-spacing:0.643px;">Time</div>
<div class="t" style="left:446.60px;top:1004.75px;height:31px;line-height:31px;font-size:22px;color:#cdcdcd;letter-spacing:0.658px;">Video</div>
<div style="left:400px;top:1004px;width:398px;height:26px;overflow:hidden;background:none;"><svg class="i" style="left:11px;top:4.300px" width="30" height="25"><use href="#folder"/></svg></div>
<div style="left:0px;top:1030px;width:798px;height:19px;background:#313131;border-top:2px solid #101010;border-bottom:1px solid #181818;"></div>
<div style="left:369px;top:1036.5px;width:60px;height:6px;background:#0c0c0c;border-radius:3px;"></div>
<div style="left:598px;top:1053.8px;width:190.2px;height:168.4px;background:none;border:4px solid #fad53c;border-radius:12px;"></div>
<svg class="i" style="left:20px;top:1050px;" width="200" height="180"><use href="#bigf"/></svg>
<div class="t" style="left:70.25px;top:1189.29px;height:35px;line-height:35px;font-size:25px;color:#c8c8c8;letter-spacing:0.565px;">Aura</div>
<svg class="i" style="left:218px;top:1052.5px;" width="200" height="180"><use href="#bigf"/></svg>
<div class="t" style="left:263.00px;top:1192.75px;height:31px;line-height:31px;font-size:22px;color:#c8c8c8;letter-spacing:0.660px;">Bloom</div>
<svg class="i" style="left:416px;top:1052.5px;" width="200" height="180"><use href="#bigf"/></svg>
<div class="t" style="left:458.50px;top:1192.75px;height:31px;line-height:31px;font-size:22px;color:#c8c8c8;letter-spacing:0.552px;">Dazzle</div>
<svg class="i" style="left:614px;top:1052.5px;" width="200" height="180"><use href="#bigf"/></svg>
<div class="t" style="left:667.50px;top:1192.75px;height:31px;line-height:31px;font-size:22px;color:#ffffff;letter-spacing:0.691px;">Glint</div>
<svg class="i" style="left:20px;top:1228.5px;" width="200" height="180"><use href="#bigf"/></svg>
<div class="t" style="left:63.75px;top:1368.75px;height:31px;line-height:31px;font-size:22px;color:#c8c8c8;letter-spacing:0.676px;">Gloom</div>
<svg class="i" style="left:218px;top:1228.5px;" width="200" height="180"><use href="#bigf"/></svg>
<div class="t" style="left:269.75px;top:1368.75px;height:31px;line-height:31px;font-size:22px;color:#c8c8c8;letter-spacing:0.460px;">Glow</div>
<svg class="i" style="left:416px;top:1228.5px;" width="200" height="180"><use href="#bigf"/></svg>
<div class="t" style="left:439.25px;top:1368.75px;height:31px;line-height:31px;font-size:22px;color:#c8c8c8;letter-spacing:0.507px;">Light Rays</div>
<svg class="i" style="left:614px;top:1228.5px;" width="200" height="180"><use href="#bigf"/></svg>
<div class="t" style="left:633.00px;top:1368.75px;height:31px;line-height:31px;font-size:22px;color:#c8c8c8;letter-spacing:0.638px;">Outer Glow</div>
<svg class="i" style="left:20px;top:1404.5px;" width="200" height="180"><use href="#bigf"/></svg>
<div class="t" style="left:47.00px;top:1544.75px;height:31px;line-height:31px;font-size:22px;color:#c8c8c8;letter-spacing:0.705px;">Overdrive</div>
<div style="left:0px;top:1830px;width:798px;height:2px;background:#040404;"></div>
<svg class="i" style="left:20px;top:1838px;" width="36" height="18" viewBox="0 0 36 18"><path d="M1 16 V2 H10 L12 5 H24 V16" fill="none" stroke="#b0b0b0" stroke-width="1.8"/><path d="M1 8 H24" stroke="#b0b0b0" stroke-width="1.500"/><path d="M29 7 V15 M25 11 H33" stroke="#b0b0b0" stroke-width="1.800"/></svg>
<svg class="i" style="left:86px;top:1838px;" width="26" height="16" viewBox="0 0 26 16"><circle cx="12" cy="12" r="9.500" fill="none" stroke="#b0b0b0" stroke-width="2"/></svg>
<svg class="i" style="left:153.5px;top:1840.5px;" width="28" height="14" viewBox="0 0 28 14"><path d="M2 13 V1.500 H24 V13 M8 13 V7 H24" fill="none" stroke="#b0b0b0" stroke-width="1.800"/></svg>
<svg class="i" style="left:679px;top:1838px;" width="30" height="10" viewBox="0 0 30 10"><rect x="1" y="1" width="8" height="8" fill="none" stroke="#5b66f0" stroke-width="1.800"/><rect x="17.5" y="1" width="8" height="8" fill="none" stroke="#5b66f0" stroke-width="1.800"/></svg>
<svg class="i" style="left:744px;top:1838px;" width="28" height="12" viewBox="0 0 28 12"><path d="M1 2 H27 M1 10 H27" stroke="#c0c0c0" stroke-width="1.800"/></svg>
<div style="left:800px;top:138px;width:203px;height:60px;background:#141414;"></div>
<div style="left:1003px;top:138px;width:403px;height:58px;background:#1e1e1e;"></div>
<div style="left:1003px;top:196px;width:403px;height:2px;background:#040404;"></div>
<div style="left:1002px;top:138px;width:2px;height:58px;background:#121212;"></div>
<div style="left:1199.5px;top:138px;width:2px;height:58px;background:#0c0c0c;"></div>
<div style="left:1406px;top:138px;width:2px;height:1103px;background:#040404;"></div>
<div class="t" style="left:862.50px;top:151.77px;height:33px;line-height:33px;font-size:23.5px;color:#5a64ea;letter-spacing:1.093px;-webkit-text-stroke:0.5px #5a64ea;">Layers</div>
<div class="t" style="left:1067.10px;top:151.77px;height:33px;line-height:33px;font-size:23.5px;color:#c0c0c0;letter-spacing:1.198px;-webkit-text-stroke:0.5px #c0c0c0;">Media</div>
<div class="t" style="left:1270.50px;top:151.77px;height:33px;line-height:33px;font-size:23.5px;color:#c0c0c0;letter-spacing:1.473px;-webkit-text-stroke:0.5px #c0c0c0;">Audio</div>
<svg class="i" style="left:1047px;top:237px;" width="21" height="27" viewBox="0 0 21 27"><path d="M0.500 0.500 H12 V9 H20.5 V26.5 H0.500 Z" fill="#a8a8a8"/><path d="M13.5 0.500 L20.5 7.500 H13.5 Z" fill="#a8a8a8"/></svg>
<div class="t" style="left:1086.00px;top:233.25px;height:31px;line-height:31px;font-size:22px;color:#c8c8c8;letter-spacing:1.588px;">Project</div>
<svg class="i" style="left:1359.5px;top:240px;" width="26" height="22"><use href="#lock"/></svg>
<div style="left:800px;top:300px;width:606px;height:2px;background:#141414;"></div>
<div style="left:800px;top:302px;width:606px;height:102.5px;background:#505050;"></div>
<div style="left:800px;top:404px;width:606px;height:1.5px;background:#171717;"></div>
<div style="left:800px;top:508px;width:606px;height:2px;background:#151515;"></div>
<div style="left:800px;top:550px;width:606px;height:2px;background:#151515;"></div>
<div style="left:800px;top:592px;width:606px;height:2px;background:#151515;"></div>
<div style="left:862px;top:306.0px;width:130px;height:91.5px;background:none;background-color:#474747;background-image:linear-gradient(45deg,#383838 25%,transparent 25%,transparent 75%,#383838 75%),linear-gradient(45deg,#383838 25%,transparent 25%,transparent 75%,#383838 75%);background-size:8px 8px;background-position:0 0,4px 4px;border:1.5px solid #727272;"></div>
<div style="left:864.5px;top:319.0px;width:125px;height:65px;background:#8c8c8c;box-shadow:inset 0 0 3px rgba(60,60,60,.6);"></div>
<svg class="i" style="left:906px;top:339.5px;" width="42" height="28" viewBox="0 0 42 28"><path d="M21 2 V24 M4 14 L21 24 L38 14" fill="none" stroke="#777" stroke-width="2.400" stroke-linecap="round" stroke-linejoin="round"/></svg>
<div style="left:862px;top:410.0px;width:130px;height:91.5px;background:none;background-color:#474747;background-image:linear-gradient(45deg,#383838 25%,transparent 25%,transparent 75%,#383838 75%),linear-gradient(45deg,#383838 25%,transparent 25%,transparent 75%,#383838 75%);background-size:8px 8px;background-position:0 0,4px 4px;border:1.5px solid #727272;"></div>
<div style="left:864.5px;top:423.0px;width:125px;height:65px;background:#8c8c8c;box-shadow:inset 0 0 3px rgba(60,60,60,.6);"></div>
<svg class="i" style="left:906px;top:443.5px;" width="42" height="28" viewBox="0 0 42 28"><path d="M21 2 V24 M4 14 L21 24 L38 14" fill="none" stroke="#777" stroke-width="2.400" stroke-linecap="round" stroke-linejoin="round"/></svg>
<div style="left:816px;top:341px;width:24px;height:24px;background:#6e6e6e;border-radius:5px;"></div>
<svg class="i" style="left:816px;top:341px;" width="24" height="24" viewBox="0 0 24 24"><path d="M5.6 12.8 L10.2 17.4 L18.4 6.4" fill="none" stroke="#e8e8e8" stroke-width="2.8" stroke-linecap="round" stroke-linejoin="round"/></svg>
<svg class="i" style="left:816px;top:445px;" width="24" height="24"><use href="#chk"/></svg>
<svg class="i" style="left:816px;top:518px;" width="24" height="24"><use href="#chk"/></svg>
<svg class="i" style="left:816px;top:560px;" width="24" height="24"><use href="#chk"/></svg>
<svg class="i" style="left:1013px;top:346px;" width="18" height="14.5"><use href="#tri"/></svg>
<svg class="i" style="left:1044.5px;top:340.5px;" width="28" height="27" viewBox="0 0 28 27"><path d="M6.500 6 H27.5 V26.5 H6.500 Z" fill="#9c9c9c"/><rect x="0" y="0" width="22.5" height="19" fill="#505050"/><rect x="0.500" y="0.500" width="20.5" height="17.3" fill="#b6b6b6"/></svg>
<div class="t" style="left:1086.50px;top:336.75px;height:31px;line-height:31px;font-size:22px;color:#ffffff;letter-spacing:1.214px;text-decoration:underline;text-decoration-thickness:1.6px;text-underline-offset:3.5px;">Group</div>
<svg class="i" style="left:1328.5px;top:341.5px;" width="23" height="26" viewBox="0 0 23 26"><rect x="0.500" y="0.500" width="17.5" height="5" fill="#8a8a8a"/><rect x="0.500" y="7" width="7.500" height="18" fill="#8c8c8c"/><rect x="9.500" y="7" width="13" height="12.500" fill="#b6b6b6"/></svg>
<svg class="i" style="left:1359.5px;top:343.5px;" width="26" height="22"><use href="#lock"/></svg>
<svg class="i" style="left:1045px;top:450px;" width="18" height="14.5"><use href="#tri"/></svg>
<svg class="i" style="left:1076.5px;top:446.5px;" width="29" height="27" viewBox="0 0 29 27"><rect x="0.800" y="0.800" width="24.6" height="18.6" fill="#505050" stroke="#c8c8c8" stroke-width="1.500"/><circle cx="6" cy="6.500" r="2.200" fill="#e4e4e4"/><rect x="10.5" y="8.500" width="17.5" height="17.5" rx="4.500" fill="#ffffff"/><path d="M19.2 11.5 V22 M14.8 17.8 L19.2 22.3 L23.7 17.8" fill="none" stroke="#1e1e1e" stroke-width="2.200" stroke-linecap="round" stroke-linejoin="round"/></svg>
<div class="t" style="left:1118.80px;top:440.75px;height:31px;line-height:31px;font-size:22px;color:#c8c8c8;letter-spacing:0.569px;">Effect So…</div>
<svg class="i" style="left:1248.5px;top:446px;" width="26" height="26" viewBox="0 0 26 26"><path fill="#a0a0a0" fill-rule="evenodd" d="M0.500 6.500 H20 V25 H0.500 Z M2 8 v2.600 h2.600 v-2.600 Z M2 12.2 v2.600 h2.600 v-2.600 Z M2 16.4 v2.600 h2.600 v-2.600 Z M2 20.6 v2.600 h2.600 v-2.600 Z M16 20.6 v2.600 h2.600 v-2.600 Z M6 8 H14.5 V15.5 H6 Z M6 17 H14.5 V23.5 H6 Z"/><rect x="6" y="17" width="8.500" height="6.500" fill="#444"/><rect x="7.200" y="0.800" width="17.5" height="16" fill="#1c1c1c" stroke="#d0d0d0" stroke-width="1.500"/><rect x="9" y="5.500" width="10" height="9.500" fill="#8c8c8c"/><path d="M21 6 V15 M19.8 8 h2.600 M19.8 11 h2.600 M19.800 14 h2.600" stroke="#8c8c8c" stroke-width="1.300"/></svg>
<svg class="i" style="left:1359.5px;top:447.5px;" width="26" height="22"><use href="#lock"/></svg>
<svg class="i" style="left:1109.5px;top:516.5px;" width="28" height="28"><use href="#smf"/></svg>
<div class="t" style="left:1151.00px;top:514.75px;height:31px;line-height:31px;font-size:22px;color:#c8c8c8;letter-spacing:1.191px;">Glint</div>
<svg class="i" style="left:1359.5px;top:519.5px;" width="26" height="22"><use href="#lock"/></svg>
<svg class="i" style="left:1109.5px;top:558.5px;" width="28" height="28"><use href="#smf"/></svg>
<div class="t" style="left:1151.00px;top:556.75px;height:31px;line-height:31px;font-size:22px;color:#c8c8c8;letter-spacing:1.383px;">Defocus</div>
<svg class="i" style="left:1359.5px;top:561.5px;" width="26" height="22"><use href="#lock"/></svg>
<div style="left:800px;top:1194px;width:606px;height:2px;background:#040404;"></div>
<svg class="i" style="left:821px;top:1203px;" width="28" height="28" viewBox="0 0 28 28"><circle cx="11" cy="11" r="8.800" fill="none" stroke="#d0d0d0" stroke-width="2"/><path d="M17.5 17.5 L26 26" stroke="#d0d0d0" stroke-width="2.200" stroke-linecap="round"/></svg>
<svg class="i" style="left:885px;top:1202px;" width="32" height="26" viewBox="0 0 32 26"><rect x="1" y="1" width="29" height="24" fill="none" stroke="#c4c4c4" stroke-width="2"/><path d="M1 9 H21 V25" fill="none" stroke="#c4c4c4" stroke-width="2"/></svg>
<svg class="i" style="left:1222px;top:1203px;color:#5560e8;fill:#5560e8;" width="30" height="24"><use href="#cbd"/></svg>
<svg class="i" style="left:1289.7px;top:1203px;color:#5560e8;fill:#5560e8;" width="26" height="26"><use href="#gear"/></svg>
<svg class="i" style="left:1354px;top:1201.5px;color:#5560e8;fill:#5560e8;" width="32" height="28"><use href="#lay"/></svg>
<div style="left:800px;top:1238px;width:608px;height:2.2px;background:#040404;"></div>
<div style="left:1408px;top:196px;width:1944px;height:2px;background:#040404;"></div>
<div class="t" style="left:2800.40px;top:150.78px;height:34px;line-height:34px;font-size:24px;color:#cccccc;letter-spacing:0.681px;-webkit-text-stroke:0.3px #cccccc;">Fit: 41%</div>
<svg class="i" style="left:2901px;top:156.5px;color:#c0c0c0;" width="12" height="23"><use href="#step"/></svg>
<svg class="i" style="left:2948px;top:154px;" width="28" height="24" viewBox="0 0 28 24"><defs><linearGradient id="cwa" x1="0" y1="0" x2="1" y2="0"><stop offset="0" stop-color="#9a4fb8"/><stop offset="1" stop-color="#b8693c"/></linearGradient><linearGradient id="cwb" x1="0" y1="0" x2="1" y2="0"><stop offset="0" stop-color="#3566b8"/><stop offset="1" stop-color="#4f9c52"/></linearGradient><linearGradient id="cwm" x1="0" y1="0" x2="0" y2="1"><stop offset="0.150" stop-color="#fff" stop-opacity="0"/><stop offset=".85" stop-color="#fff"/></linearGradient><mask id="cwk"><rect width="28" height="24" fill="url(#cwm)"/></mask></defs><rect width="28" height="24" rx="1.500" fill="url(#cwa)"/><rect width="28" height="24" rx="1.500" fill="url(#cwb)" mask="url(#cwk)"/><circle cx="14" cy="12" r="4.600" fill="#bcbcbc"/></svg>
<svg class="i" style="left:2988px;top:163px;color:#6a6a6a;" width="14" height="9"><use href="#chev"/></svg>
<div class="t" style="left:3036.50px;top:150.78px;height:34px;line-height:34px;font-size:24px;color:#cccccc;letter-spacing:-0.203px;-webkit-text-stroke:0.3px #cccccc;">Render</div>
<svg class="i" style="left:3123px;top:164px;color:#cccccc;" width="14" height="9"><use href="#chev"/></svg>
<div class="t" style="left:3171.30px;top:150.78px;height:34px;line-height:34px;font-size:24px;color:#cccccc;letter-spacing:0.271px;-webkit-text-stroke:0.3px #cccccc;">View</div>
<svg class="i" style="left:3232.5px;top:164px;color:#cccccc;" width="14" height="9"><use href="#chev"/></svg>
<div style="left:3280px;top:154.5px;width:28px;height:23.5px;background:#505050;border:2px solid #d8d8d8;border-radius:2px;"></div>
<svg class="i" style="left:3317px;top:156.5px;color:#c0c0c0;" width="12" height="23"><use href="#step"/></svg>
<div style="left:1525px;top:203.5px;width:1718px;height:905.5px;background:#989898;background:linear-gradient(#9a9a9a,#979797);"></div>
<div style="left:1525px;top:289px;width:1718px;height:2px;background:#ff8400;"></div>
<div style="left:1525px;top:1021px;width:1718px;height:2px;background:#ff8400;"></div>
<svg class="i" style="left:2100px;top:470px;" width="570" height="380" viewBox="2100 470 570 380"><defs><filter id="ab" x="-10%" y="-10%" width="120%" height="120%"><feGaussianBlur stdDeviation="1.3"/></filter></defs><g filter="url(#ab)"><g transform="translate(2384,0) scale(2,1)"><path d="M0 510.5 V813" stroke="#7a7a7a" stroke-width="31.5" stroke-linecap="round" fill="none"/><path d="M-106.5 702.3 L0 813.5 L106.5 702.3" stroke="#7a7a7a" stroke-width="29.5" stroke-linecap="round" stroke-linejoin="round" fill="none"/></g></g></svg>
<div style="left:1514px;top:203px;width:2px;height:906.5px;background:#161616;"></div>
<div style="left:3250px;top:203px;width:2px;height:906.5px;background:#161616;"></div>
<div style="left:1515px;top:203px;width:2.2px;height:906.5px;background:#adadad;"></div>
<div style="left:3251px;top:203px;width:2.2px;height:906.5px;background:#adadad;"></div>
<div style="left:1507.5px;top:648.0px;width:17px;height:17px;border-radius:50%;background:#5052ee;border:1.500px solid #0c0c1c;"></div>
<div style="left:3243.5px;top:648.0px;width:17px;height:17px;border-radius:50%;background:#5052ee;border:1.500px solid #0c0c1c;"></div>
<div style="left:1408px;top:198px;width:1944px;height:6px;overflow:hidden;background:none;"><div style="left:99.70000000000005px;top:-11.600px;width:16.6px;height:16.6px;border-radius:50%;background:#6466f6;border:1.500px solid #050505;"></div><div style="left:967.6999999999998px;top:-11.600px;width:16.6px;height:16.6px;border-radius:50%;background:#6466f6;border:1.500px solid #050505;"></div><div style="left:1835.6999999999998px;top:-11.600px;width:16.6px;height:16.6px;border-radius:50%;background:#6466f6;border:1.500px solid #050505;"></div></div>
<div style="left:1408px;top:1108px;width:1944px;height:5.700px;overflow:hidden;background:none;"><div style="left:99.70000000000005px;top:0.900px;width:16.6px;height:16.6px;border-radius:50%;background:#6466f6;border:1.500px solid #050505;"></div><div style="left:967.6999999999998px;top:0.900px;width:16.6px;height:16.6px;border-radius:50%;background:#6466f6;border:1.500px solid #050505;"></div><div style="left:1835.6999999999998px;top:0.900px;width:16.6px;height:16.6px;border-radius:50%;background:#6466f6;border:1.500px solid #050505;"></div></div>
<svg class="i" style="left:2366px;top:638px;" width="120" height="38" viewBox="0 0 120 38"><path d="M32 18.5 H90" stroke="#555" stroke-width="4.5" opacity=".6"/><path d="M32 17.8 H90" stroke="#f2f2f2" stroke-width="2"/><circle cx="18.6" cy="17.7" r="13.2" fill="none" stroke="#0a0a0a" stroke-width="2.4"/><circle cx="18.6" cy="17.7" r="10.2" fill="none" stroke="#c6c6c6" stroke-width="3.4"/><circle cx="18.6" cy="17.7" r="6.6" fill="#d8d8d8" stroke="#1c1c1c" stroke-width="3.6"/><path d="M18.6 4.500 V11.5 M18.6 24 V31 M5.500 17.7 H12 M25 17.7 H32" stroke="#0a0a0a" stroke-width="1.800"/><circle cx="97.9" cy="18" r="10" fill="#f4f4f4" stroke="#0a0a0a" stroke-width="2.2"/><circle cx="97.9" cy="18" r="6.2" fill="#4a3ff0" stroke="#9a9a9a" stroke-width="1"/></svg>
<div class="t" style="left:2309.70px;top:642.29px;height:36px;line-height:36px;font-size:25.5px;color:#ffffff;letter-spacing:-0.385px;text-shadow:0 2px 3px rgba(0,0,0,.75),0 0 2px rgba(0,0,0,.5);-webkit-text-stroke:0.4px #fff;">Effect Source</div>
<div style="left:1408px;top:1113.7px;width:1944px;height:1.7px;background:#040404;"></div>
<div style="left:1408px;top:1145.9px;width:1944px;height:1.6px;background:#040404;"></div>
<div style="left:1464px;top:1147.4px;width:1838px;height:30.6px;background:#0f2033;"></div>
<div class="t" style="left:1474.50px;top:1148.05px;height:31px;line-height:31px;font-size:22px;color:#7a99c6;letter-spacing:0.464px;">Group</div>
<div style="left:1408px;top:1178px;width:1944px;height:2px;background:#040404;"></div>
<svg class="i" style="left:1452px;top:1115px;" width="20" height="32" viewBox="0 0 20 32"><path d="M2 10 L11 17 L2 26 Z" fill="#9c9c9c"/><path d="M8 2 H17 V12 L12.5 16 L8 12 Z" fill="#1e1e1e" stroke="#d8d8d8" stroke-width="1.800"/><path d="M12.5 1 V31" stroke="#e8e8e8" stroke-width="2"/></svg>
<svg class="i" style="left:3299.8px;top:1116px;" width="16" height="30" viewBox="0 0 16 30"><path d="M3.300 0 V30" stroke="#c4c4c4" stroke-width="2.400"/><path d="M14.600 5 V25 L4.600 15 Z" fill="#bcbcbc"/></svg>
<svg class="i" style="left:1449px;top:1192px;" width="24" height="34" viewBox="0 0 24 34"><path d="M3.100 2.600 V25.3 L9.300 20.3 L14 31.5 L17.3 30 L12.600 19.2 L19.4 18.500 Z" fill="#5560e8"/></svg>
<svg class="i" style="left:1492px;top:1204.5px;color:#5560e8;" width="14" height="9"><use href="#chev"/></svg>
<svg class="i" style="left:1545px;top:1192px;" width="36" height="36" viewBox="0 0 36 36"><g fill="none" stroke="#d4d4d4" stroke-width="2.200"><ellipse cx="17.5" cy="17.300" rx="15.2" ry="8.200" transform="rotate(-17 17.5 17.3)"/><ellipse cx="17.5" cy="17.300" rx="8.200" ry="15.2" transform="rotate(-17 17.5 17.3)"/></g></svg>
<svg class="i" style="left:1629px;top:1193px;" width="30" height="32" viewBox="0 0 30 32"><path d="M8.500 16 L24.5 17 L26.5 21 L22.8 30.1 H10.6 L6.500 23.500 Z" fill="#d4d4d4"/><g stroke="#d4d4d4" stroke-linecap="round" fill="none"><path d="M11.5 18 L7.400 7.200" stroke-width="3.400"/><path d="M15.5 17 L14.400 3.600" stroke-width="3.400"/><path d="M19.5 17 L21.600 5.800" stroke-width="3.400"/><path d="M23.500 19.5 L27 12" stroke-width="3"/><path d="M10 24.5 L3.600 17.200" stroke-width="3.600"/></g></svg>
<svg class="i" style="left:1676px;top:1204.5px;color:#d0d0d0;" width="14" height="9"><use href="#chev"/></svg>
<svg class="i" style="left:2173px;top:1196px;" width="32" height="26" viewBox="0 0 32 26"><rect x="1.500" y="1.500" width="29" height="23" fill="none" stroke="#d8d8d8" stroke-width="2"/><rect x="5.500" y="5.500" width="21" height="15" fill="#c8c8c8"/></svg>
<svg class="i" style="left:2221px;top:1205px;color:#d0d0d0;" width="14" height="9"><use href="#chev"/></svg>
<svg class="i" style="left:2258px;top:1192px;" width="42" height="34" viewBox="0 0 42 34"><path d="M5 28 C6 14 14 6 30 4" fill="none" stroke="#d0d0d0" stroke-width="1.800"/><circle cx="5" cy="29" r="2.600" fill="#1e1e1e" stroke="#d0d0d0" stroke-width="1.500"/><circle cx="14.5" cy="12" r="2.600" fill="#1e1e1e" stroke="#d0d0d0" stroke-width="1.500"/><path d="M32.5 2 L38.5 17 L35 26 H30 L26.5 17 Z" fill="#d8d8d8"/><path d="M32.5 6 V19" stroke="#1e1e1e" stroke-width="1.500"/><circle cx="32.5" cy="19.5" r="1.800" fill="#1e1e1e"/><rect x="26" y="28.5" width="13" height="3.500" fill="#d8d8d8"/></svg>
<svg class="i" style="left:2313px;top:1205px;color:#d0d0d0;" width="14" height="9"><use href="#chev"/></svg>
<svg class="i" style="left:2366px;top:1192px;" width="34" height="34" viewBox="0 0 34 34"><path d="M31.5 2.500 L13 21" stroke="#d8d8d8" stroke-width="3" stroke-linecap="round"/><path d="M13.5 20 C10 19.5 6.500 22 5.500 27 C5 29.5 3.500 30.5 1.500 31.5 C8 32.5 14.5 29.5 15 24 Z" fill="#d8d8d8"/></svg>
<div class="t" style="left:2452.78px;top:1180.96px;height:56px;line-height:56px;font-size:40px;color:#d8d8d8;letter-spacing:0.000px;font-family:'Liberation Serif',serif;font-weight:bold;">T</div>
<svg class="i" style="left:2497px;top:1205px;color:#d0d0d0;" width="14" height="9"><use href="#chev"/></svg>
<svg class="i" style="left:2539.5px;top:1195.5px;" width="35" height="27" viewBox="0 0 35 27"><rect x="1.500" y="1.500" width="32" height="24" fill="#7a7a7a" stroke="#c8c8c8" stroke-width="2"/><rect x="9" y="8.500" width="17" height="10" fill="#1e1e1e" stroke="#e0e0e0" stroke-width="2"/></svg>
<svg class="i" style="left:2589px;top:1205px;color:#d0d0d0;" width="14" height="9"><use href="#chev"/></svg>
<svg class="i" style="left:3294px;top:1193px;" width="32" height="32" viewBox="0 0 32 32"><path d="M3 3 L13.500 13.500 M18.500 18.500 L29 29 M3 12 V3 H12 M20 29 H29 V20" fill="none" stroke="#d0d0d0" stroke-width="2.200"/></svg>
<div style="left:1408px;top:1238px;width:1944px;height:2.2px;background:#040404;"></div>
<div style="left:800px;top:1240px;width:2552px;height:60px;background:#353535;background:linear-gradient(#373737,#333333);"></div>
<div style="left:800px;top:1300px;width:2552px;height:2px;background:#040404;"></div>
<svg class="i" style="left:836px;top:1254px;" width="40" height="34" viewBox="0 0 40 34"><path d="M4.800 16 H9.500 L17 13 V26 L9.500 22.8 H4.800 Z" fill="#bcbcbc"/><path d="M20 15 A 5.800 5.800 0 0 1 20 24 M23 11.500 A 10.500 10.500 0 0 1 24 26.5 M26.5 8 A 15.500 15.500 0 0 1 27.5 30" fill="none" stroke="#bcbcbc" stroke-width="1.900"/><path d="M1.300 5.900 L36.8 28.6" stroke="#353535" stroke-width="6"/><path d="M1.300 5.900 L36.8 28.6" stroke="#bcbcbc" stroke-width="2"/></svg>
<svg class="i" style="left:916px;top:1256px;" width="36" height="30" viewBox="0 0 36 30"><path d="M21 5.500 H9.500 A 7.500 7.500 0 0 0 9.500 21.500 H13" fill="none" stroke="#5560e8" stroke-width="2"/><path d="M15 24 H26.5 A 7.500 7.500 0 0 0 26.5 8.500 H23" fill="none" stroke="#5560e8" stroke-width="2"/><path d="M17 1 L22 5.500 L17 10 M19 19.500 L14 24 L19 28.5" fill="none" stroke="#5560e8" stroke-width="2" stroke-linejoin="round" stroke-linecap="round"/></svg>
<svg class="i" style="left:999px;top:1256.5px;" width="38" height="32" viewBox="0 0 38 32"><path d="M26.3 9.500 A 12.800 12.800 0 1 0 21.5 25" fill="none" stroke="#e0202a" stroke-width="2.200"/><rect x="23" y="15.5" width="9" height="9" transform="rotate(45 27.5 20)" fill="#353535" stroke="#e0202a" stroke-width="2.400"/></svg>
<svg class="i" style="left:1835px;top:1260px;" width="20" height="22" viewBox="0 0 20 22"><rect x="1" y="1" width="2.500" height="20" fill="#d0d0d0"/><path d="M18.5 1.500 V20.5 L5 11 Z" fill="#d0d0d0"/></svg>
<svg class="i" style="left:1900px;top:1259px;" width="20" height="23" viewBox="0 0 20 23"><path d="M1.500 1 L19 11.500 L1.500 22 Z" fill="#d8d8d8"/></svg>
<div class="t" style="left:2017.6px;top:1239.7px;height:62px;line-height:62px;font-size:48px;letter-spacing:-0.700px;color:#606060;-webkit-text-stroke:1.400px #353535;">00000</div>
<svg class="i" style="left:2150px;top:1250px;" width="20" height="40" viewBox="0 0 20 40"><path d="M13.800 3.800 V36.100" stroke="#b8b8b8" stroke-width="2.900" fill="none"/><path d="M4.200 11.600 L13.600 5.300" stroke="#b8b8b8" stroke-width="2.500" fill="none" stroke-linecap="butt"/></svg>
<svg class="i" style="left:2270px;top:1267px;color:#d0d0d0;" width="14" height="9"><use href="#chev"/></svg>
<svg class="i" style="left:2334px;top:1254px;" width="36" height="34" viewBox="0 0 36 34"><circle cx="16" cy="18" r="14" fill="none" stroke="#5c5c5c" stroke-width="2"/><path d="M16 8.500 V18 L23 13" fill="none" stroke="#5560e8" stroke-width="2"/><path d="M28 1.500 L33 6 H28 Z" fill="#5560e8"/></svg>
<svg class="i" style="left:3139px;top:1257px;" width="28" height="26" viewBox="0 0 28 26"><rect x="1" y="1" width="26" height="24" fill="none" stroke="#5560e8" stroke-width="2"/><path d="M6.500 1 V25 M21.5 1 V25 M6.500 13 H21.5" stroke="#5560e8" stroke-width="2"/><path d="M1 7 H6.500 M1 13 H6.500 M1 19 H6.500 M21.5 7 H27 M21.5 13 H27 M21.5 19 H27" stroke="#5560e8" stroke-width="1.500"/></svg>
<svg class="i" style="left:3212px;top:1257.5px;" width="30" height="28" viewBox="0 0 30 28"><path d="M1.500 10 H6 L12 5 V23 L6 18 H1.500 Z" fill="none" stroke="#5560e8" stroke-width="1.800" stroke-linejoin="round"/><path d="M16 9 A 6 6 0 0 1 16 19 M20 3.500 A 12.500 12.500 0 0 1 20 24.5" fill="none" stroke="#5560e8" stroke-width="2"/></svg>
<svg class="i" style="left:3272px;top:1257px;" width="52" height="28" viewBox="0 0 52 28"><path d="M12.700 2.200 L24 13.500 L12.700 24.800 L1.400 13.500 Z" fill="#353535" stroke="#6a6a6a" stroke-width="1.800"/><path d="M25.200 2.200 L36.5 13.500 L25.200 24.800 L13.900 13.500 Z" fill="#353535" stroke="#8a8a8a" stroke-width="1.800"/><path d="M38.400 2.200 L49.700 13.500 L38.400 24.800 L27.100 13.500 Z" fill="#353535" stroke="#d2d2d2" stroke-width="1.900"/></svg>
<div style="left:800px;top:1344px;width:2552px;height:2px;background:#040404;"></div>
<div style="left:1517px;top:1302px;width:2px;height:548px;background:#040404;"></div>
<div class="t" style="left:817.20px;top:1308.58px;height:34px;line-height:34px;font-size:24px;color:#a2a2a2;letter-spacing:0.257px;-webkit-text-stroke:0.45px #1e1e1e;">Timeline</div>
<svg class="i" style="left:1336.5px;top:1309px;color:#5560e8;fill:#5560e8;" width="30" height="24"><use href="#cbd"/></svg>
<svg class="i" style="left:1404px;top:1308px;color:#5560e8;fill:#5560e8;" width="26" height="26"><use href="#gear"/></svg>
<svg class="i" style="left:1468.5px;top:1307px;color:#5560e8;fill:#5560e8;" width="32" height="28"><use href="#lay"/></svg>
<svg class="i" style="left:3165.5px;top:1307.5px;" width="46" height="30" viewBox="0 0 46 30"><path d="M10 5.500 L19.5 15 L10 24.5 L0.500 15 Z" fill="none" stroke="#3a3f9a" stroke-width="1.500"/><path d="M10 15 H26" stroke="#3a3f9a" stroke-width="1.500"/><path d="M34.5 4.500 L45 15 L34.5 25.5 L24 15 Z" fill="#5560e8"/></svg>
<svg class="i" style="left:3239px;top:1304px;" width="40" height="36" viewBox="0 0 40 36"><rect x="1" y="13" width="16.500" height="10.500" rx="2" fill="#5560e8"/><rect x="20.5" y="13" width="16.500" height="10.500" rx="2" fill="#5560e8"/><path d="M19 2 V8 M12.5 4.500 L14.5 8.500 M25.5 4.500 L23.5 8.500 M19 34 V28.5 M12.500 32 L14.5 28 M25.500 32 L23.5 28" stroke="#5560e8" stroke-width="1.800"/></svg>
<svg class="i" style="left:3312px;top:1308px;" width="30" height="30" viewBox="0 0 30 30"><circle cx="12" cy="12" r="10" fill="none" stroke="#d0d0d0" stroke-width="2"/><path d="M9 7.500 L16 12 L9 16.500 Z" fill="#d0d0d0"/><path d="M19.500 19.500 L28 28" stroke="#d0d0d0" stroke-width="2.200" stroke-linecap="round"/></svg>
<div style="left:1519px;top:1346px;width:1833px;height:43.5px;background:#212121;"></div>
<div style="left:800px;top:1388px;width:717px;height:2px;background:#101010;"></div>
<div style="left:800px;top:1390.3px;width:717px;height:11.5px;background:#505050;"></div>
<div style="left:800px;top:1401.8px;width:717px;height:1.5px;background:#141414;"></div>
<div style="left:800px;top:1463px;width:717px;height:2px;background:#171717;"></div>
<div style="left:800px;top:1519px;width:717px;height:2px;background:#171717;"></div>
<div style="left:800px;top:1575px;width:717px;height:2px;background:#171717;"></div>
<svg class="i" style="left:810px;top:1422px;" width="24" height="24"><use href="#chk"/></svg>
<svg class="i" style="left:810px;top:1481px;" width="24" height="24"><use href="#chk"/></svg>
<svg class="i" style="left:810px;top:1537px;" width="24" height="24"><use href="#chk"/></svg>
<svg class="i" style="left:893px;top:1427px;" width="18" height="14.5"><use href="#tri"/></svg>
<svg class="i" style="left:925px;top:1424.5px;" width="29" height="27" viewBox="0 0 29 27"><rect x="0.800" y="0.800" width="24.6" height="18.6" fill="#505050" stroke="#c8c8c8" stroke-width="1.500"/><circle cx="6" cy="6.500" r="2.200" fill="#e4e4e4"/><rect x="10.5" y="8.500" width="17.5" height="17.5" rx="4.500" fill="#ffffff"/><path d="M19.2 11.5 V22 M14.8 17.8 L19.2 22.3 L23.7 17.8" fill="none" stroke="#1e1e1e" stroke-width="2.200" stroke-linecap="round" stroke-linejoin="round"/></svg>
<div class="t" style="left:966.50px;top:1417.95px;height:31px;line-height:31px;font-size:22px;color:#d0d0d0;letter-spacing:1.527px;">Effect Source</div>
<svg class="i" style="left:1360.5px;top:1422.5px;" width="26" height="26" viewBox="0 0 26 26"><path fill="#a0a0a0" fill-rule="evenodd" d="M0.500 6.500 H20 V25 H0.500 Z M2 8 v2.600 h2.600 v-2.600 Z M2 12.2 v2.600 h2.600 v-2.600 Z M2 16.4 v2.600 h2.600 v-2.600 Z M2 20.6 v2.600 h2.600 v-2.600 Z M16 20.6 v2.600 h2.600 v-2.600 Z M6 8 H14.5 V15.5 H6 Z M6 17 H14.5 V23.5 H6 Z"/><rect x="6" y="17" width="8.500" height="6.500" fill="#444"/><rect x="7.200" y="0.800" width="17.5" height="16" fill="#1c1c1c" stroke="#d0d0d0" stroke-width="1.500"/><rect x="9" y="5.500" width="10" height="9.500" fill="#8c8c8c"/><path d="M21 6 V15 M19.8 8 h2.600 M19.8 11 h2.600 M19.800 14 h2.600" stroke="#8c8c8c" stroke-width="1.300"/></svg>
<svg class="i" style="left:1471.5px;top:1424.5px;" width="26" height="22"><use href="#lock"/></svg>
<svg class="i" style="left:957.5px;top:1479px;" width="28" height="28"><use href="#smf"/></svg>
<div class="t" style="left:999.00px;top:1476.45px;height:31px;line-height:31px;font-size:22px;color:#d0d0d0;letter-spacing:1.191px;">Glint</div>
<svg class="i" style="left:1471.5px;top:1483.5px;" width="26" height="22"><use href="#lock"/></svg>
<svg class="i" style="left:957.5px;top:1535px;" width="28" height="28"><use href="#smf"/></svg>
<div class="t" style="left:999.00px;top:1532.45px;height:31px;line-height:31px;font-size:22px;color:#d0d0d0;letter-spacing:1.383px;">Defocus</div>
<svg class="i" style="left:1471.5px;top:1539.5px;" width="26" height="22"><use href="#lock"/></svg>
<div style="left:1519px;top:1346px;width:87px;height:484px;background:#191919;background:linear-gradient(90deg,#161616,#1c1c1c);"></div>
<div style="left:3244px;top:1346px;width:88.5px;height:484px;background:#191919;"></div>
<div style="left:1519px;top:1346px;width:87px;height:43.5px;background:#1b1b1b;"></div>
<div style="left:3244px;top:1346px;width:88.5px;height:43.5px;background:#1c1c1c;"></div>
<svg class="i" style="left:1519px;top:1391px;" width="1833" height="440" viewBox="0 0 1833 440"><path d="M250.60 0 V440" stroke="#383838" stroke-width="1.700" stroke-dasharray="4.500 3.500"/><path d="M414.40 0 V440" stroke="#383838" stroke-width="1.700" stroke-dasharray="4.500 3.500"/><path d="M578.20 0 V440" stroke="#383838" stroke-width="1.700" stroke-dasharray="4.500 3.500"/><path d="M742.00 0 V440" stroke="#383838" stroke-width="1.700" stroke-dasharray="4.500 3.500"/><path d="M905.80 0 V440" stroke="#383838" stroke-width="1.700" stroke-dasharray="4.500 3.500"/><path d="M1069.60 0 V440" stroke="#383838" stroke-width="1.700" stroke-dasharray="4.500 3.500"/><path d="M1233.40 0 V440" stroke="#383838" stroke-width="1.700" stroke-dasharray="4.500 3.500"/><path d="M1397.20 0 V440" stroke="#383838" stroke-width="1.700" stroke-dasharray="4.500 3.500"/><path d="M1561.00 0 V440" stroke="#383838" stroke-width="1.700" stroke-dasharray="4.500 3.500"/><path d="M1724.80 0 V440" stroke="#383838" stroke-width="1.700" stroke-dasharray="4.500 3.500"/></svg>
<div style="left:800px;top:1579.5px;width:2552px;height:17px;background:#323232;border-top:1px solid #262626;border-bottom:1px solid #262626;"></div>
<div style="left:1129px;top:1585.5px;width:60px;height:6px;background:#0e0e0e;border-radius:3px;"></div>
<div style="left:2409.5px;top:1585px;width:60px;height:6px;background:#0e0e0e;border-radius:3px;"></div>
<svg class="i" style="left:1519px;top:1346px;" width="1833" height="56" viewBox="0 0 1833 56"><rect x="85.90" y="10" width="1.800" height="23" fill="#393939"/><rect x="96.14" y="10" width="1.800" height="23" fill="#393939"/><rect x="106.37" y="10" width="1.800" height="23" fill="#393939"/><rect x="116.61" y="10" width="1.800" height="23" fill="#393939"/><rect x="126.85" y="10" width="1.800" height="23" fill="#393939"/><rect x="137.09" y="10" width="1.800" height="23" fill="#393939"/><rect x="147.32" y="10" width="1.800" height="23" fill="#393939"/><rect x="157.56" y="10" width="1.800" height="23" fill="#393939"/><rect x="167.80" y="10" width="1.800" height="23" fill="#393939"/><rect x="178.04" y="10" width="1.800" height="23" fill="#393939"/><rect x="188.27" y="10" width="1.800" height="23" fill="#393939"/><rect x="198.51" y="10" width="1.800" height="23" fill="#393939"/><rect x="208.75" y="10" width="1.800" height="23" fill="#393939"/><rect x="218.99" y="10" width="1.800" height="23" fill="#393939"/><rect x="229.22" y="10" width="1.800" height="23" fill="#393939"/><rect x="239.46" y="10" width="1.800" height="23" fill="#393939"/><rect x="259.94" y="10" width="1.800" height="23" fill="#393939"/><rect x="270.18" y="10" width="1.800" height="23" fill="#393939"/><rect x="280.41" y="10" width="1.800" height="23" fill="#393939"/><rect x="290.65" y="10" width="1.800" height="23" fill="#393939"/><rect x="300.89" y="10" width="1.800" height="23" fill="#393939"/><rect x="311.12" y="10" width="1.800" height="23" fill="#393939"/><rect x="321.36" y="10" width="1.800" height="23" fill="#393939"/><rect x="331.60" y="10" width="1.800" height="23" fill="#393939"/><rect x="341.84" y="10" width="1.800" height="23" fill="#393939"/><rect x="352.07" y="10" width="1.800" height="23" fill="#393939"/><rect x="362.31" y="10" width="1.800" height="23" fill="#393939"/><rect x="372.55" y="10" width="1.800" height="23" fill="#393939"/><rect x="382.79" y="10" width="1.800" height="23" fill="#393939"/><rect x="393.02" y="10" width="1.800" height="23" fill="#393939"/><rect x="403.26" y="10" width="1.800" height="23" fill="#393939"/><rect x="423.74" y="10" width="1.800" height="23" fill="#393939"/><rect x="433.98" y="10" width="1.800" height="23" fill="#393939"/><rect x="444.21" y="10" width="1.800" height="23" fill="#393939"/><rect x="454.45" y="10" width="1.800" height="23" fill="#393939"/><rect x="464.69" y="10" width="1.800" height="23" fill="#393939"/><rect x="474.93" y="10" width="1.800" height="23" fill="#393939"/><rect x="485.16" y="10" width="1.800" height="23" fill="#393939"/><rect x="495.40" y="10" width="1.800" height="23" fill="#393939"/><rect x="505.64" y="10" width="1.800" height="23" fill="#393939"/><rect x="515.88" y="10" width="1.800" height="23" fill="#393939"/><rect x="526.11" y="10" width="1.800" height="23" fill="#393939"/><rect x="536.35" y="10" width="1.800" height="23" fill="#393939"/><rect x="546.59" y="10" width="1.800" height="23" fill="#393939"/><rect x="556.82" y="10" width="1.800" height="23" fill="#393939"/><rect x="567.06" y="10" width="1.800" height="23" fill="#393939"/><rect x="587.54" y="10" width="1.800" height="23" fill="#393939"/><rect x="597.78" y="10" width="1.800" height="23" fill="#393939"/><rect x="608.01" y="10" width="1.800" height="23" fill="#393939"/><rect x="618.25" y="10" width="1.800" height="23" fill="#393939"/><rect x="628.49" y="10" width="1.800" height="23" fill="#393939"/><rect x="638.73" y="10" width="1.800" height="23" fill="#393939"/><rect x="648.96" y="10" width="1.800" height="23" fill="#393939"/><rect x="659.20" y="10" width="1.800" height="23" fill="#393939"/><rect x="669.44" y="10" width="1.800" height="23" fill="#393939"/><rect x="679.67" y="10" width="1.800" height="23" fill="#393939"/><rect x="689.91" y="10" width="1.800" height="23" fill="#393939"/><rect x="700.15" y="10" width="1.800" height="23" fill="#393939"/><rect x="710.39" y="10" width="1.800" height="23" fill="#393939"/><rect x="720.63" y="10" width="1.800" height="23" fill="#393939"/><rect x="730.86" y="10" width="1.800" height="23" fill="#393939"/><rect x="751.34" y="10" width="1.800" height="23" fill="#393939"/><rect x="761.57" y="10" width="1.800" height="23" fill="#393939"/><rect x="771.81" y="10" width="1.800" height="23" fill="#393939"/><rect x="782.05" y="10" width="1.800" height="23" fill="#393939"/><rect x="792.29" y="10" width="1.800" height="23" fill="#393939"/><rect x="802.53" y="10" width="1.800" height="23" fill="#393939"/><rect x="812.76" y="10" width="1.800" height="23" fill="#393939"/><rect x="823.00" y="10" width="1.800" height="23" fill="#393939"/><rect x="833.24" y="10" width="1.800" height="23" fill="#393939"/><rect x="843.48" y="10" width="1.800" height="23" fill="#393939"/><rect x="853.71" y="10" width="1.800" height="23" fill="#393939"/><rect x="863.95" y="10" width="1.800" height="23" fill="#393939"/><rect x="874.19" y="10" width="1.800" height="23" fill="#393939"/><rect x="884.42" y="10" width="1.800" height="23" fill="#393939"/><rect x="894.66" y="10" width="1.800" height="23" fill="#393939"/><rect x="915.14" y="10" width="1.800" height="23" fill="#393939"/><rect x="925.38" y="10" width="1.800" height="23" fill="#393939"/><rect x="935.61" y="10" width="1.800" height="23" fill="#393939"/><rect x="945.85" y="10" width="1.800" height="23" fill="#393939"/><rect x="956.09" y="10" width="1.800" height="23" fill="#393939"/><rect x="966.32" y="10" width="1.800" height="23" fill="#393939"/><rect x="976.56" y="10" width="1.800" height="23" fill="#393939"/><rect x="986.80" y="10" width="1.800" height="23" fill="#393939"/><rect x="997.04" y="10" width="1.800" height="23" fill="#393939"/><rect x="1007.28" y="10" width="1.800" height="23" fill="#393939"/><rect x="1017.51" y="10" width="1.800" height="23" fill="#393939"/><rect x="1027.75" y="10" width="1.800" height="23" fill="#393939"/><rect x="1037.99" y="10" width="1.800" height="23" fill="#393939"/><rect x="1048.22" y="10" width="1.800" height="23" fill="#393939"/><rect x="1058.46" y="10" width="1.800" height="23" fill="#393939"/><rect x="1078.94" y="10" width="1.800" height="23" fill="#393939"/><rect x="1089.17" y="10" width="1.800" height="23" fill="#393939"/><rect x="1099.41" y="10" width="1.800" height="23" fill="#393939"/><rect x="1109.65" y="10" width="1.800" height="23" fill="#393939"/><rect x="1119.89" y="10" width="1.800" height="23" fill="#393939"/><rect x="1130.12" y="10" width="1.800" height="23" fill="#393939"/><rect x="1140.36" y="10" width="1.800" height="23" fill="#393939"/><rect x="1150.60" y="10" width="1.800" height="23" fill="#393939"/><rect x="1160.84" y="10" width="1.800" height="23" fill="#393939"/><rect x="1171.07" y="10" width="1.800" height="23" fill="#393939"/><rect x="1181.31" y="10" width="1.800" height="23" fill="#393939"/><rect x="1191.55" y="10" width="1.800" height="23" fill="#393939"/><rect x="1201.79" y="10" width="1.800" height="23" fill="#393939"/><rect x="1212.03" y="10" width="1.800" height="23" fill="#393939"/><rect x="1222.26" y="10" width="1.800" height="23" fill="#393939"/><rect x="1242.74" y="10" width="1.800" height="23" fill="#393939"/><rect x="1252.97" y="10" width="1.800" height="23" fill="#393939"/><rect x="1263.21" y="10" width="1.800" height="23" fill="#393939"/><rect x="1273.45" y="10" width="1.800" height="23" fill="#393939"/><rect x="1283.69" y="10" width="1.800" height="23" fill="#393939"/><rect x="1293.92" y="10" width="1.800" height="23" fill="#393939"/><rect x="1304.16" y="10" width="1.800" height="23" fill="#393939"/><rect x="1314.40" y="10" width="1.800" height="23" fill="#393939"/><rect x="1324.64" y="10" width="1.800" height="23" fill="#393939"/><rect x="1334.88" y="10" width="1.800" height="23" fill="#393939"/><rect x="1345.11" y="10" width="1.800" height="23" fill="#393939"/><rect x="1355.35" y="10" width="1.800" height="23" fill="#393939"/><rect x="1365.59" y="10" width="1.800" height="23" fill="#393939"/><rect x="1375.82" y="10" width="1.800" height="23" fill="#393939"/><rect x="1386.06" y="10" width="1.800" height="23" fill="#393939"/><rect x="1406.54" y="10" width="1.800" height="23" fill="#393939"/><rect x="1416.78" y="10" width="1.800" height="23" fill="#393939"/><rect x="1427.01" y="10" width="1.800" height="23" fill="#393939"/><rect x="1437.25" y="10" width="1.800" height="23" fill="#393939"/><rect x="1447.49" y="10" width="1.800" height="23" fill="#393939"/><rect x="1457.72" y="10" width="1.800" height="23" fill="#393939"/><rect x="1467.96" y="10" width="1.800" height="23" fill="#393939"/><rect x="1478.20" y="10" width="1.800" height="23" fill="#393939"/><rect x="1488.44" y="10" width="1.800" height="23" fill="#393939"/><rect x="1498.67" y="10" width="1.800" height="23" fill="#393939"/><rect x="1508.91" y="10" width="1.800" height="23" fill="#393939"/><rect x="1519.15" y="10" width="1.800" height="23" fill="#393939"/><rect x="1529.39" y="10" width="1.800" height="23" fill="#393939"/><rect x="1539.62" y="10" width="1.800" height="23" fill="#393939"/><rect x="1549.86" y="10" width="1.800" height="23" fill="#393939"/><rect x="1570.34" y="10" width="1.800" height="23" fill="#393939"/><rect x="1580.57" y="10" width="1.800" height="23" fill="#393939"/><rect x="1590.81" y="10" width="1.800" height="23" fill="#393939"/><rect x="1601.05" y="10" width="1.800" height="23" fill="#393939"/><rect x="1611.29" y="10" width="1.800" height="23" fill="#393939"/><rect x="1621.53" y="10" width="1.800" height="23" fill="#393939"/><rect x="1631.76" y="10" width="1.800" height="23" fill="#393939"/><rect x="1642.00" y="10" width="1.800" height="23" fill="#393939"/><rect x="1652.24" y="10" width="1.800" height="23" fill="#393939"/><rect x="1662.47" y="10" width="1.800" height="23" fill="#393939"/><rect x="1672.71" y="10" width="1.800" height="23" fill="#393939"/><rect x="1682.95" y="10" width="1.800" height="23" fill="#393939"/><rect x="1693.19" y="10" width="1.800" height="23" fill="#393939"/><rect x="1703.42" y="10" width="1.800" height="23" fill="#393939"/><rect x="1713.66" y="10" width="1.800" height="23" fill="#393939"/><rect x="1734.14" y="10" width="1.800" height="23" fill="#2c2c2c"/><rect x="1744.38" y="10" width="1.800" height="23" fill="#2c2c2c"/><rect x="1754.61" y="10" width="1.800" height="23" fill="#2c2c2c"/><rect x="1764.85" y="10" width="1.800" height="23" fill="#2c2c2c"/><rect x="1775.09" y="10" width="1.800" height="23" fill="#2c2c2c"/><rect x="1785.32" y="10" width="1.800" height="23" fill="#2c2c2c"/><rect x="1795.56" y="10" width="1.800" height="23" fill="#2c2c2c"/><rect x="1805.80" y="10" width="1.800" height="23" fill="#2c2c2c"/><rect x="249.60" y="10" width="2.200" height="23.500" fill="#8a8a8a"/><rect x="413.40" y="10" width="2.200" height="23.500" fill="#8a8a8a"/><rect x="577.20" y="10" width="2.200" height="23.500" fill="#8a8a8a"/><rect x="741.00" y="10" width="2.200" height="23.500" fill="#8a8a8a"/><rect x="904.80" y="10" width="2.200" height="23.500" fill="#8a8a8a"/><rect x="1068.60" y="10" width="2.200" height="23.500" fill="#8a8a8a"/><rect x="1232.40" y="10" width="2.200" height="23.500" fill="#8a8a8a"/><rect x="1396.20" y="10" width="2.200" height="23.500" fill="#8a8a8a"/><rect x="1560.00" y="10" width="2.200" height="23.500" fill="#8a8a8a"/><rect x="1723.80" y="10" width="2.200" height="23.500" fill="#8a8a8a"/></svg>
<div class="t" style="left:1776.10px;top:1352.24px;height:29px;line-height:29px;font-size:21px;color:#7c7c7c;letter-spacing:0.141px;">49</div>
<div class="t" style="left:1939.90px;top:1352.24px;height:29px;line-height:29px;font-size:21px;color:#7c7c7c;letter-spacing:0.141px;">97</div>
<div class="t" style="left:2103.70px;top:1352.24px;height:29px;line-height:29px;font-size:21px;color:#7c7c7c;letter-spacing:-0.020px;">145</div>
<div class="t" style="left:2267.50px;top:1352.24px;height:29px;line-height:29px;font-size:21px;color:#7c7c7c;letter-spacing:-0.020px;">193</div>
<div class="t" style="left:2431.30px;top:1352.24px;height:29px;line-height:29px;font-size:21px;color:#7c7c7c;letter-spacing:-0.020px;">241</div>
<div class="t" style="left:2595.10px;top:1352.24px;height:29px;line-height:29px;font-size:21px;color:#7c7c7c;letter-spacing:-0.020px;">289</div>
<div class="t" style="left:2758.90px;top:1352.24px;height:29px;line-height:29px;font-size:21px;color:#7c7c7c;letter-spacing:-0.020px;">337</div>
<div class="t" style="left:2922.70px;top:1352.24px;height:29px;line-height:29px;font-size:21px;color:#7c7c7c;letter-spacing:-0.020px;">385</div>
<div class="t" style="left:3086.50px;top:1352.24px;height:29px;line-height:29px;font-size:21px;color:#7c7c7c;letter-spacing:-0.020px;">433</div>
<div class="t" style="left:3250.30px;top:1352.24px;height:29px;line-height:29px;font-size:21px;color:#4a4a4a;letter-spacing:-0.020px;">481</div>
<div style="left:1608px;top:1403.5px;width:1634px;height:35px;background:#1c3656;border-radius:6px;box-shadow:0 1px 1px rgba(0,0,0,.5);"></div>
<div class="t" style="left:1616.50px;top:1406.25px;height:31px;line-height:31px;font-size:22px;color:#7f9fca;letter-spacing:0.736px;">Effect Source</div>
<div style="left:1608px;top:1466px;width:1634px;height:50px;background:#484083;border-radius:6px;box-shadow:0 1px 1px rgba(0,0,0,.5);"></div>
<div class="t" style="left:1616.50px;top:1466.75px;height:31px;line-height:31px;font-size:22px;color:#cfc9f2;letter-spacing:0.566px;">Glint</div>
<div style="left:1608px;top:1522px;width:1634px;height:50px;background:#484083;border-radius:6px;box-shadow:0 1px 1px rgba(0,0,0,.5);"></div>
<div class="t" style="left:1616.50px;top:1522.75px;height:31px;line-height:31px;font-size:22px;color:#cfc9f2;letter-spacing:0.716px;">Defocus</div>
<div style="left:1604.8px;top:1378px;width:2.2px;height:452px;background:#d8d8d8;"></div>
<svg class="i" style="left:1594px;top:1354px;" width="22" height="32" viewBox="0 0 22 32"><path d="M2 4 L10.500 12 L2 23 Z" fill="#a8a8a8"/><path d="M3.500 3.500 H20 V18 L11.800 25 L3.500 18 Z" fill="none" stroke="#e0e0e0" stroke-width="2"/><path d="M11.500 6 V28" stroke="#e0e0e0" stroke-width="1.500"/></svg>
<svg class="i" style="left:3240px;top:1356px;" width="16" height="24" viewBox="0 0 16 24"><path d="M3.200 0 V24" stroke="#d8d8d8" stroke-width="2.400"/><path d="M14.500 2 V22 L4.400 12 Z" fill="#c4c4c4"/></svg>
<div style="left:3338px;top:1418px;width:16px;height:154px;background:#484848;border-radius:7px 0 0 7px;"></div>
<div style="left:800px;top:1830px;width:2552px;height:2px;background:#040404;"></div>
<div class="t" style="left:824.00px;top:1836.28px;height:34px;line-height:34px;font-size:24px;color:#b8b8b8;letter-spacing:-0.938px;">Custom</div>
<svg class="i" style="left:936px;top:1840px;" width="16" height="12" viewBox="0 0 16 12"><path d="M2 10 L8 3 L14 10" fill="none" stroke="#b8b8b8" stroke-width="2"/></svg>
<div style="left:1240.500px;top:1839px;width:21px;height:21px;border-radius:50%;background:#6c6c6c;"></div>
<div style="left:1292px;top:1844px;width:21px;height:21px;border-radius:50%;background:#5a5a5a;"></div>
<div style="left:1481px;top:1841px;width:20px;height:20px;border-radius:50%;background:#6c6c6c;"></div>
<div style="left:1540.5px;top:1845px;width:1795px;height:14px;background:#4a4a4a;border-radius:7px;"></div>
</div>
</body></html>
